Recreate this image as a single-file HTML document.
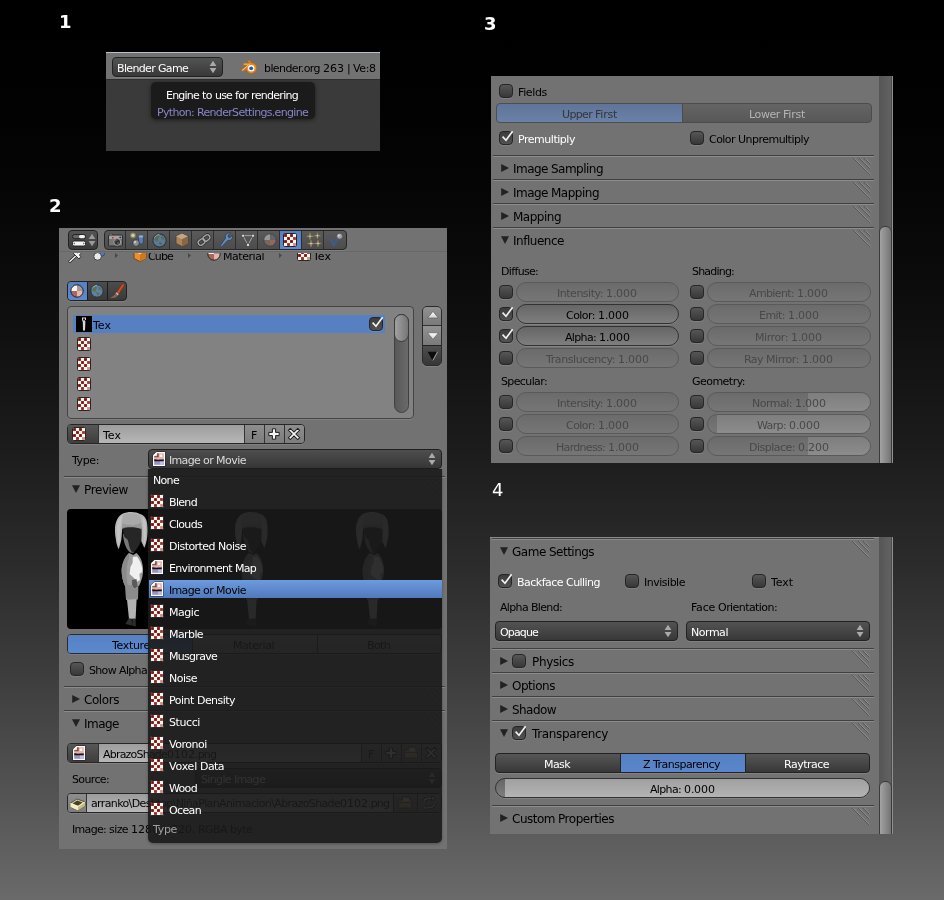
<!DOCTYPE html>
<html><head><meta charset="utf-8"><title>Blender UI</title>
<style>
html,body{margin:0;padding:0}
body{width:944px;height:900px;overflow:hidden;position:relative;font-family:"DejaVu Sans","Liberation Sans",sans-serif;font-size:11px;color:#000;
background:linear-gradient(180.00deg,#000000 0.00%,#000000 4.17%,#010101 8.33%,#020202 12.50%,#040404 16.67%,#050505 20.83%,#080808 25.00%,#0a0a0a 29.17%,#0d0d0d 33.33%,#101010 37.50%,#141414 41.67%,#181818 45.83%,#1c1c1c 50.00%,#212121 54.17%,#262626 58.33%,#2b2b2b 62.50%,#313131 66.67%,#373737 70.83%,#3d3d3d 75.00%,#444444 79.17%,#4b4b4b 83.33%,#525252 87.50%,#5a5a5a 91.67%,#626262 95.83%,#6a6a6a 100.00%)}
.abs,.abs div,.abs svg{position:absolute;box-sizing:border-box;white-space:nowrap}
.abs svg{overflow:visible}
.abs,.num{will-change:transform}
.num{position:absolute;color:#fff;font-weight:bold;font-size:18px;line-height:20px}
.t{line-height:14px;height:14px}
</style></head><body>
<div class="num" style="left:59px;top:12px">1</div>
<div class="num" style="left:49px;top:196px">2</div>
<div class="num" style="left:484px;top:14px">3</div>
<div class="num" style="left:492px;top:480px;font-weight:normal">4</div>
<!-- PANEL 1 -->
<div class="abs" style="left:106px;top:52px;width:274px;height:99px;background:#3a3a3a;overflow:hidden">
<div style="left:0px;top:0px;width:274px;height:28px;background:#727272;border-top:1px solid #b4bfd0;border-bottom:1px solid #2e2e2e"></div><div style="left:6px;top:5px;width:111px;height:20px;background:linear-gradient(#535353,#383838);border:1px solid #222;border-radius:4px;box-shadow:0 1px 0 rgba(255,255,255,.10)"></div><div class="t" style="left:11px;top:10px;font-size:11px;color:#fff;"><span style="letter-spacing:-0.66px">Blender</span><span style="letter-spacing:-0.50px"> </span><span style="letter-spacing:-0.69px">Game</span></div><svg style="left:103px;top:8px" width="8" height="14" viewBox="0 0 8 14"><path d="M4 0.8 L7.4 6 L0.6 6 Z M4 13.2 L7.4 8 L0.6 8 Z" fill="#aaa"/></svg><svg style="left:135px;top:8px" width="17" height="15" viewBox="0 0 17 15"><g fill="#f08a14" stroke="#b8620a" stroke-width="0.5" stroke-linejoin="round"><path d="M0.3 10.3 L7 4.6 L9.4 6.6 L1.7 11.5 Z"/><path d="M2.2 3.5 L9.8 3.5 L9.8 5.3 L2.2 5.3 Z"/><path d="M6.7 1.3 L7.9 0.3 L12 3.4 L10 4.8 Z"/><circle cx="10.3" cy="8.1" r="5.3"/></g><path d="M1.2 10.3 L7 5.4" stroke="#ffc884" stroke-width="0.9" fill="none"/><path d="M2.8 4.1 L9 4.1" stroke="#ffc884" stroke-width="0.8" fill="none"/><circle cx="10.2" cy="8.2" r="3.3" fill="#fff"/><circle cx="10.2" cy="8.3" r="1.9" fill="#2659b5"/></svg><div class="t" style="left:158px;top:10px;font-size:11px;color:#000;"><span style="letter-spacing:-0.60px">blender.org</span><span style="letter-spacing:-0.50px"> </span>263<span style="letter-spacing:-0.50px"> </span><span style="letter-spacing:-0.70px">|</span><span style="letter-spacing:-0.50px"> </span><span style="letter-spacing:-0.38px">Ve:</span>8</div><div style="left:45px;top:30px;width:164px;height:37px;background:#1b1b1b;border-radius:5px;box-shadow:0 1px 4px rgba(0,0,0,.55)"></div><div class="t" style="left:60px;top:37px;font-size:11px;color:#fff;"><span style="letter-spacing:-0.78px">Engine</span><span style="letter-spacing:-0.50px"> </span><span style="letter-spacing:-0.52px">to</span><span style="letter-spacing:-0.50px"> </span><span style="letter-spacing:-0.82px">use</span><span style="letter-spacing:-0.50px"> </span><span style="letter-spacing:-0.71px">for</span><span style="letter-spacing:-0.50px"> </span><span style="letter-spacing:-0.70px">rendering</span></div><div class="t" style="left:51px;top:54px;font-size:11px;color:#8686c8;"><span style="letter-spacing:-0.69px">Python:</span><span style="letter-spacing:-0.50px"> </span><span style="letter-spacing:-0.68px">RenderSettings.engine</span></div>
</div>
<!-- PANEL 2 -->
<div class="abs" style="left:59px;top:228px;width:388px;height:621px;background:#727272;overflow:hidden">
<div style="left:9px;top:2px;width:30px;height:20px;background:linear-gradient(#555,#3a3a3a);border:1px solid #222;border-radius:4px;box-shadow:0 1px 0 rgba(255,255,255,.1)"></div><svg style="left:13px;top:6px" width="14" height="13" viewBox="0 0 14 13"><rect x="0.5" y="0.5" width="13" height="4.2" rx="2" fill="#666" stroke="#1c1c1c" stroke-width="0.9"/><rect x="7" y="1" width="6" height="3.2" rx="1.6" fill="#f2f2f2"/><rect x="0.5" y="7" width="13" height="5" rx="1.6" fill="#f4f4f4" stroke="#1c1c1c" stroke-width="0.9"/><path d="M2.6 8.4 L1.4 9.5 L2.6 10.6 Z M11.4 8.4 L12.6 9.5 L11.4 10.6 Z" fill="#222"/></svg><svg style="left:29px;top:5px" width="8" height="14" viewBox="0 0 8 14"><path d="M4 0.8 L7.4 6 L0.6 6 Z M4 13.2 L7.4 8 L0.6 8 Z" fill="#9a9a9a"/></svg><div style="left:45px;top:2px;width:243px;height:20px;background:linear-gradient(#5a5a5a,#4c4c4c);border:1px solid #262626;border-radius:4px;box-shadow:0 1px 0 rgba(255,255,255,.1)"></div><div style="left:48px;top:4px;width:17px;height:16px;opacity:.85"><svg style="left:0px;top:0px" width="17" height="16" viewBox="0 0 17 16"><rect x="2.4" y="1.6" width="2.6" height="2" fill="#c8c8c8" stroke="#333" stroke-width="0.5"/><rect x="1.5" y="3" width="14" height="11" rx="0.8" fill="#7e7e7e" stroke="#262626" stroke-width="1"/><rect x="2.2" y="3.8" width="12.6" height="3.2" fill="#b4b4b4"/><circle cx="10.2" cy="10" r="3.4" fill="#2c2c30" stroke="#bdbdbd" stroke-width="0.9"/><path d="M8.4 9.4 A2 2 0 0 1 10.6 8" stroke="#a04848" stroke-width="1.2" fill="none"/><circle cx="11" cy="11" r="0.9" fill="#4a6a9c"/><rect x="5" y="5" width="1.6" height="1.4" fill="#e02020"/><rect x="12.4" y="4.6" width="1.8" height="1.6" fill="#2a2a3a"/></svg></div><div style="left:66px;top:3px;width:1px;height:18px;background:#2e2e2e"></div><div style="left:71px;top:4px;width:17px;height:16px;opacity:.85"><svg style="left:0px;top:0px" width="16" height="16" viewBox="0 0 16 16"><rect x="8.6" y="3.4" width="4.8" height="8.6" rx="2" fill="#5e86c0" stroke="#2a3e5c" stroke-width="0.8"/><ellipse cx="11" cy="4.4" rx="2.4" ry="1.2" fill="#9cbce4"/><circle cx="6" cy="11" r="3.4" fill="#9a9a9a" stroke="#2a2a2a" stroke-width="0.8"/><circle cx="5" cy="10" r="1.2" fill="#dcdcdc"/><circle cx="3" cy="3.4" r="1.8" fill="#e8e49a"/><circle cx="3" cy="3.4" r="3" fill="#e8e49a" fill-opacity=".3"/></svg></div><div style="left:88px;top:3px;width:1px;height:18px;background:#2e2e2e"></div><div style="left:93px;top:5px;width:15px;height:15px;opacity:.85"><svg style="left:0px;top:0px" width="15" height="15" viewBox="0 0 14 14"><circle cx="7" cy="7" r="6.2" fill="#5e80aa" stroke="#26303c" stroke-width="1"/><path d="M3 3.4 C4.5 2 6.5 2.4 7 3.6 C6.2 5 5.6 5.4 5.8 7 C5 8.6 3.6 7.6 2.4 6.2 Z" fill="#5e7244"/><path d="M8.6 3 C10 2.8 11.6 4.4 11.8 6.2 C10.8 6.6 10.2 5.6 9.2 5.8 C8.4 5 8.2 4 8.6 3 Z" fill="#5e7244"/><path d="M6.4 8.6 C7.6 8 9 8.6 9.6 9.8 C9 11.4 7.8 11.8 6.8 11 Z" fill="#5e7244"/><path d="M2.2 4.4 A6 6 0 0 1 7 1.2" fill="none" stroke="#c8d8ec" stroke-width="0.9" stroke-opacity=".7"/></svg></div><div style="left:110px;top:3px;width:1px;height:18px;background:#2e2e2e"></div><div style="left:115px;top:4px;width:17px;height:16px;opacity:.85"><svg style="left:0px;top:0px" width="16" height="16" viewBox="0 0 16 16"><path d="M8 1.4 L14 4.2 L14 11.4 L8 14.6 L2 11.4 L2 4.2 Z" fill="#b98d5e" stroke="#4e3a24" stroke-width="0.8"/><path d="M8 1.4 L14 4.2 L8 7.2 L2 4.2 Z" fill="#d2b690"/><path d="M8 7.2 L14 4.2 L14 11.4 L8 14.6 Z" fill="#946a40"/></svg></div><div style="left:132px;top:3px;width:1px;height:18px;background:#2e2e2e"></div><div style="left:137px;top:4px;width:17px;height:16px;opacity:.85"><svg style="left:0px;top:0px" width="16" height="16" viewBox="0 0 16 16"><g fill="none" stroke="#2a2a2a" stroke-width="3"><rect x="-3.6" y="-2.6" width="7.2" height="5.2" rx="2.6" transform="translate(5.6 10) rotate(-38)"/><rect x="-3.6" y="-2.6" width="7.2" height="5.2" rx="2.6" transform="translate(10.4 6) rotate(-38)"/></g><g fill="none" stroke="#b4b4b4" stroke-width="1.4"><rect x="-3.6" y="-2.6" width="7.2" height="5.2" rx="2.6" transform="translate(5.6 10) rotate(-38)"/><rect x="-3.6" y="-2.6" width="7.2" height="5.2" rx="2.6" transform="translate(10.4 6) rotate(-38)"/></g></svg></div><div style="left:154px;top:3px;width:1px;height:18px;background:#2e2e2e"></div><div style="left:159px;top:4px;width:17px;height:16px;opacity:.85"><svg style="left:0px;top:0px" width="16" height="16" viewBox="0 0 16 16"><path d="M2.2 13.8 L3.6 15 L10 8.2 C11.8 8.8 13.6 8 14.4 6 C14.8 5 14.8 4 14.4 3.2 L12.2 5.6 L10.4 5.2 L10 3.4 L12.4 1.2 C11.4 0.8 10.2 0.8 9.2 1.4 C7.4 2.4 6.8 4.2 7.6 6 Z" fill="#6a94cc" stroke="#23384f" stroke-width="0.8" stroke-linejoin="round"/></svg></div><div style="left:176px;top:3px;width:1px;height:18px;background:#2e2e2e"></div><div style="left:181px;top:4px;width:17px;height:16px;opacity:.85"><svg style="left:0px;top:0px" width="16" height="16" viewBox="0 0 16 16"><path d="M3 3.6 L13 3.6 L8 13 Z" fill="none" stroke="#b0b0b0" stroke-width="1"/><rect x="1.8" y="2.4" width="2.6" height="2.6" fill="#f4f4f4" stroke="#333" stroke-width="0.5"/><rect x="11.6" y="2.4" width="2.6" height="2.6" fill="#f4f4f4" stroke="#333" stroke-width="0.5"/><rect x="6.7" y="11.6" width="2.6" height="2.6" fill="#f4f4f4" stroke="#333" stroke-width="0.5"/></svg></div><div style="left:198px;top:3px;width:1px;height:18px;background:#2e2e2e"></div><div style="left:203px;top:4px;width:17px;height:16px;opacity:.85"><svg style="left:0px;top:0px" width="16" height="16" viewBox="0 0 16 16"><defs><clipPath id="mg"><circle cx="8" cy="8" r="6.2"/></clipPath></defs><g clip-path="url(#mg)"><rect x="0" y="0" width="8" height="8" fill="#a4a4a4"/><rect x="8" y="0" width="8" height="8" fill="#686868"/><rect x="0" y="8" width="8" height="8" fill="#7c6c68"/><rect x="8" y="8" width="8" height="8" fill="#a26a60"/></g><circle cx="8" cy="8" r="6.2" fill="none" stroke="#3a3a3a" stroke-width="0.8"/></svg></div><div style="left:220px;top:3px;width:1px;height:18px;background:#2e2e2e"></div><div style="left:221px;top:3px;width:21px;height:18px;background:linear-gradient(#5680c2,#5c8ad0)"></div><svg style="left:224px;top:5px" width="14" height="14" viewBox="0 0 14 14"><rect x="0.5" y="0.5" width="13" height="13" rx="1.2" fill="#fbf8f6" stroke="#2a2626" stroke-width="1"/><rect x="1.1" y="1.1" width="2.8" height="2.8" fill="#800c06"/><rect x="7.1" y="1.1" width="2.8" height="2.8" fill="#800c06"/><rect x="4.1" y="4.1" width="2.8" height="2.8" fill="#800c06"/><rect x="10.1" y="4.1" width="2.8" height="2.8" fill="#a03024"/><rect x="1.1" y="7.1" width="2.8" height="2.8" fill="#800c06"/><rect x="7.1" y="7.1" width="2.8" height="2.8" fill="#800c06"/><rect x="4.1" y="10.1" width="2.8" height="2.8" fill="#98241a"/><rect x="10.1" y="10.1" width="2.8" height="2.8" fill="#d08878"/></svg><div style="left:242px;top:3px;width:1px;height:18px;background:#2e2e2e"></div><div style="left:247px;top:4px;width:17px;height:16px;opacity:.85"><svg style="left:0px;top:0px" width="16" height="16" viewBox="0 0 16 16"><path d="M4 0.6000000000000001 L4.55 3.6500000000000004 L7.6 4.2 L4.55 4.75 L4 7.800000000000001 L3.45 4.75 L0.3999999999999999 4.2 L3.45 3.6500000000000004 Z" fill="#f6f0d0" stroke="#9a8440" stroke-width="0.5"/><path d="M11.4 0.5999999999999996 L11.950000000000001 3.25 L14.600000000000001 3.8 L11.950000000000001 4.35 L11.4 7.0 L10.85 4.35 L8.2 3.8 L10.85 3.25 Z" fill="#f6f0d0" stroke="#9a8440" stroke-width="0.5"/><path d="M5 8.0 L5.55 11.049999999999999 L8.6 11.6 L5.55 12.15 L5 15.2 L4.45 12.15 L1.4 11.6 L4.45 11.049999999999999 Z" fill="#f6f0d0" stroke="#9a8440" stroke-width="0.5"/><path d="M12 8.0 L12.55 10.85 L15.4 11.4 L12.55 11.950000000000001 L12 14.8 L11.45 11.950000000000001 L8.6 11.4 L11.45 10.85 Z" fill="#f6f0d0" stroke="#9a8440" stroke-width="0.5"/></svg></div><div style="left:264px;top:3px;width:1px;height:18px;background:#2e2e2e"></div><div style="left:269px;top:4px;width:17px;height:16px;opacity:.85"><svg style="left:0px;top:0px" width="16" height="16" viewBox="0 0 16 16"><path d="M2 6.6 L5.8 13.6 L10.4 5.6" fill="none" stroke="#3a5e94" stroke-width="2.2" stroke-linejoin="miter"/><circle cx="11.6" cy="4.2" r="3" fill="#b4b4b4" stroke="#444" stroke-width="0.7"/><circle cx="10.8" cy="3.4" r="1" fill="#eee"/></svg></div><div style="left:0px;top:23px;width:388px;height:1px;background:#686868"></div><div style="left:0px;top:25px;width:388px;height:20px;overflow:hidden"><svg style="left:10px;top:-5px" width="16" height="16" viewBox="0 0 16 16"><path d="M0.8 13.6 L6.4 8.2" stroke="#222" stroke-width="2.8" stroke-linecap="round"/><path d="M0.8 13.6 L6.4 8.2" stroke="#f0f0f0" stroke-width="1.4" stroke-linecap="round"/><path d="M3.2 4.2 L10 11 L11.8 8.6 L10.4 7 L14 3.4 L12 1.4 L8.4 5 L6 3 Z" fill="#f2f2f2" stroke="#222" stroke-width="0.9" stroke-linejoin="round"/></svg><svg style="left:33px;top:-4px" width="16" height="16" viewBox="0 0 16 16"><rect x="7.4" y="0" width="5" height="7" rx="2" fill="#4c7cc8" stroke="#1e3860" stroke-width="0.7"/><circle cx="5.6" cy="7.4" r="3.8" fill="#eaeaea" stroke="#2a2a2a" stroke-width="0.8"/></svg><svg style="left:56px;top:0px" width="3" height="5" viewBox="0 0 3 5"><path d="M0 0 L3 2.5 L0 5 Z" fill="#484848"/></svg><svg style="left:73px;top:-6px" width="16" height="16" viewBox="0 0 16 16"><path d="M8 1.4 L14 4.2 L14 11.4 L8 14.6 L2 11.4 L2 4.2 Z" fill="#e89030" stroke="#6a3c0c" stroke-width="0.8"/><path d="M8 1.4 L14 4.2 L8 7.2 L2 4.2 Z" fill="#f8d8a0"/><path d="M8 7.2 L14 4.2 L14 11.4 L8 14.6 Z" fill="#d07818"/></svg><div class="t" style="left:89px;top:-3px;font-size:11px;color:#000;"><span style="letter-spacing:-0.85px">Cube</span></div><svg style="left:129px;top:0px" width="3" height="5" viewBox="0 0 3 5"><path d="M0 0 L3 2.5 L0 5 Z" fill="#484848"/></svg><svg style="left:148px;top:-6px" width="14" height="14" viewBox="0 0 14 14"><defs><clipPath id="mc"><circle cx="7" cy="7" r="6.2"/></clipPath></defs><g clip-path="url(#mc)"><rect x="0" y="0" width="7" height="7" fill="#f4f4f4"/><rect x="7" y="0" width="7" height="7" fill="#a09a98"/><rect x="0" y="7" width="7" height="7" fill="#a9675c"/><rect x="7" y="7" width="7" height="7" fill="#e8b4a8"/></g><circle cx="7" cy="7" r="6.2" fill="none" stroke="#222" stroke-width="1"/></svg><div class="t" style="left:164px;top:-3px;font-size:11px;color:#000;"><span style="letter-spacing:-0.46px">Material</span></div><svg style="left:220px;top:0px" width="3" height="5" viewBox="0 0 3 5"><path d="M0 0 L3 2.5 L0 5 Z" fill="#484848"/></svg><svg style="left:238px;top:-6px" width="14" height="14" viewBox="0 0 14 14"><rect x="0.5" y="0.5" width="13" height="13" rx="1.2" fill="#fbf8f6" stroke="#2a2626" stroke-width="1"/><rect x="1.1" y="1.1" width="2.8" height="2.8" fill="#800c06"/><rect x="7.1" y="1.1" width="2.8" height="2.8" fill="#800c06"/><rect x="4.1" y="4.1" width="2.8" height="2.8" fill="#800c06"/><rect x="10.1" y="4.1" width="2.8" height="2.8" fill="#a03024"/><rect x="1.1" y="7.1" width="2.8" height="2.8" fill="#800c06"/><rect x="7.1" y="7.1" width="2.8" height="2.8" fill="#800c06"/><rect x="4.1" y="10.1" width="2.8" height="2.8" fill="#98241a"/><rect x="10.1" y="10.1" width="2.8" height="2.8" fill="#d08878"/></svg><div class="t" style="left:254px;top:-3px;font-size:11px;color:#000;"><span style="letter-spacing:0.02px">Tex</span></div></div><div style="left:8px;top:53px;width:60px;height:20px;background:linear-gradient(#4c4c4c,#3a3a3a);border:1px solid #222;border-radius:4px;overflow:hidden;box-shadow:0 1px 0 rgba(255,255,255,.1)"><div style="left:-1px;top:-1px;width:20px;height:20px;background:linear-gradient(#5680c2,#5c8ad0)"></div><div style="left:19px;top:-1px;width:1px;height:20px;background:#1c1c1c"></div><div style="left:39px;top:-1px;width:1px;height:20px;background:#1c1c1c"></div></div><svg style="left:11px;top:56px" width="14" height="14" viewBox="0 0 14 14"><defs><clipPath id="mc"><circle cx="7" cy="7" r="6.2"/></clipPath></defs><g clip-path="url(#mc)"><rect x="0" y="0" width="7" height="7" fill="#f4f4f4"/><rect x="7" y="0" width="7" height="7" fill="#a09a98"/><rect x="0" y="7" width="7" height="7" fill="#a9675c"/><rect x="7" y="7" width="7" height="7" fill="#e8b4a8"/></g><circle cx="7" cy="7" r="6.2" fill="none" stroke="#222" stroke-width="1"/></svg><svg style="left:31px;top:56px" width="14" height="14" viewBox="0 0 14 14"><circle cx="7" cy="7" r="6.2" fill="#5e80aa" stroke="#26303c" stroke-width="1"/><path d="M3 3.4 C4.5 2 6.5 2.4 7 3.6 C6.2 5 5.6 5.4 5.8 7 C5 8.6 3.6 7.6 2.4 6.2 Z" fill="#5e7244"/><path d="M8.6 3 C10 2.8 11.6 4.4 11.8 6.2 C10.8 6.6 10.2 5.6 9.2 5.8 C8.4 5 8.2 4 8.6 3 Z" fill="#5e7244"/><path d="M6.4 8.6 C7.6 8 9 8.6 9.6 9.8 C9 11.4 7.8 11.8 6.8 11 Z" fill="#5e7244"/><path d="M2.2 4.4 A6 6 0 0 1 7 1.2" fill="none" stroke="#c8d8ec" stroke-width="0.9" stroke-opacity=".7"/></svg><svg style="left:50px;top:55px" width="16" height="16" viewBox="0 0 16 16"><path d="M13.6 0.6 L15.6 2 L9.8 11 L7.4 9.4 Z" fill="#cc4e22" stroke="#6a2410" stroke-width="0.5"/><path d="M7.4 9.2 L9.8 11 L8.8 12.4 L6.6 10.8 Z" fill="#b4c0d0"/><path d="M6.6 10.8 L8.8 12.4 C7.6 14.6 4.6 15 0.8 15 C3.8 13.8 5.2 12.6 6.6 10.8 Z" fill="#8e6450"/></svg><div style="left:8px;top:78px;width:347px;height:113px;background:#828282;border:1px solid #444;border-radius:4px;box-shadow:0 1px 0 rgba(255,255,255,.1)"><div style="left:-1px;top:-1px;width:345px;height:111px;"><div style="left:6px;top:9px;width:312px;height:18px;background:#5680c2;border-radius:2px"></div><div style="left:9px;top:10px;width:16px;height:16px;background:#000"></div><svg style="left:14px;top:11px" width="6" height="14" viewBox="0 0 6 14"><path d="M1 0.5 L5 0.5 L5 3 L4 3 L4.4 5 L4 13.5 L2 13.5 L1.8 5 L1 3 Z" fill="#d8d8d8"/><rect x="2" y="1.4" width="2" height="2" fill="#222"/></svg><div class="t" style="left:26px;top:13px;font-size:11px;color:#000;"><span style="letter-spacing:0.02px">Tex</span></div><div style="left:302px;top:11px;width:14px;height:14px;background:linear-gradient(#3c3c3c,#525252);border:1px solid #262626;border-radius:4px;box-shadow:0 1px 0 rgba(255,255,255,.10)"></div><svg style="left:302px;top:8px" width="18" height="18" viewBox="0 0 18 18"><path d="M3.6 8.6 L7 12.2 L13.6 3.2" fill="none" stroke="#f4f4f4" stroke-width="1.6" stroke-linecap="butt" stroke-linejoin="miter"/></svg><svg style="left:10px;top:31px" width="14" height="14" viewBox="0 0 14 14"><rect x="0.5" y="0.5" width="13" height="13" rx="1.2" fill="#fbf8f6" stroke="#2a2626" stroke-width="1"/><rect x="1.1" y="1.1" width="2.8" height="2.8" fill="#800c06"/><rect x="7.1" y="1.1" width="2.8" height="2.8" fill="#800c06"/><rect x="4.1" y="4.1" width="2.8" height="2.8" fill="#800c06"/><rect x="10.1" y="4.1" width="2.8" height="2.8" fill="#a03024"/><rect x="1.1" y="7.1" width="2.8" height="2.8" fill="#800c06"/><rect x="7.1" y="7.1" width="2.8" height="2.8" fill="#800c06"/><rect x="4.1" y="10.1" width="2.8" height="2.8" fill="#98241a"/><rect x="10.1" y="10.1" width="2.8" height="2.8" fill="#d08878"/></svg><svg style="left:10px;top:51px" width="14" height="14" viewBox="0 0 14 14"><rect x="0.5" y="0.5" width="13" height="13" rx="1.2" fill="#fbf8f6" stroke="#2a2626" stroke-width="1"/><rect x="1.1" y="1.1" width="2.8" height="2.8" fill="#800c06"/><rect x="7.1" y="1.1" width="2.8" height="2.8" fill="#800c06"/><rect x="4.1" y="4.1" width="2.8" height="2.8" fill="#800c06"/><rect x="10.1" y="4.1" width="2.8" height="2.8" fill="#a03024"/><rect x="1.1" y="7.1" width="2.8" height="2.8" fill="#800c06"/><rect x="7.1" y="7.1" width="2.8" height="2.8" fill="#800c06"/><rect x="4.1" y="10.1" width="2.8" height="2.8" fill="#98241a"/><rect x="10.1" y="10.1" width="2.8" height="2.8" fill="#d08878"/></svg><svg style="left:10px;top:71px" width="14" height="14" viewBox="0 0 14 14"><rect x="0.5" y="0.5" width="13" height="13" rx="1.2" fill="#fbf8f6" stroke="#2a2626" stroke-width="1"/><rect x="1.1" y="1.1" width="2.8" height="2.8" fill="#800c06"/><rect x="7.1" y="1.1" width="2.8" height="2.8" fill="#800c06"/><rect x="4.1" y="4.1" width="2.8" height="2.8" fill="#800c06"/><rect x="10.1" y="4.1" width="2.8" height="2.8" fill="#a03024"/><rect x="1.1" y="7.1" width="2.8" height="2.8" fill="#800c06"/><rect x="7.1" y="7.1" width="2.8" height="2.8" fill="#800c06"/><rect x="4.1" y="10.1" width="2.8" height="2.8" fill="#98241a"/><rect x="10.1" y="10.1" width="2.8" height="2.8" fill="#d08878"/></svg><svg style="left:10px;top:91px" width="14" height="14" viewBox="0 0 14 14"><rect x="0.5" y="0.5" width="13" height="13" rx="1.2" fill="#fbf8f6" stroke="#2a2626" stroke-width="1"/><rect x="1.1" y="1.1" width="2.8" height="2.8" fill="#800c06"/><rect x="7.1" y="1.1" width="2.8" height="2.8" fill="#800c06"/><rect x="4.1" y="4.1" width="2.8" height="2.8" fill="#800c06"/><rect x="10.1" y="4.1" width="2.8" height="2.8" fill="#a03024"/><rect x="1.1" y="7.1" width="2.8" height="2.8" fill="#800c06"/><rect x="7.1" y="7.1" width="2.8" height="2.8" fill="#800c06"/><rect x="4.1" y="10.1" width="2.8" height="2.8" fill="#98241a"/><rect x="10.1" y="10.1" width="2.8" height="2.8" fill="#d08878"/></svg><div style="left:327px;top:8px;width:15px;height:99px;background:linear-gradient(to right,#585858,#6a6a6a);border:1px solid #404040;border-radius:8px"></div><div style="left:327px;top:8px;width:15px;height:28px;background:linear-gradient(to right,#a0a0a0,#767676);border:1px solid #3c3c3c;border-radius:8px"></div></div></div><div style="left:363px;top:78px;width:20px;height:60px;border:1px solid #2a2a2a;border-radius:5px;overflow:hidden;background:#444;box-shadow:0 1px 0 rgba(255,255,255,.1)"><div style="left:-1px;top:-1px;width:20px;height:19px;background:linear-gradient(#929292,#7a7a7a)"></div><div style="left:-1px;top:18px;width:20px;height:20px;background:linear-gradient(#929292,#7a7a7a);border-top:1px solid #333"></div><div style="left:-1px;top:38px;width:20px;height:22px;background:linear-gradient(#4e4e4e,#343434);border-top:1px solid #222"></div><svg style="left:4px;top:4px" width="12" height="8" viewBox="0 0 12 8"><defs><linearGradient id="tg" x1="0" y1="0" x2="0" y2="1"><stop offset="0" stop-color="#fff"/><stop offset="1" stop-color="#d0d0d0"/></linearGradient></defs><path d="M6 0.4 L11.4 7 L0.6 7 Z" fill="url(#tg)" stroke="#555" stroke-width="0.6"/></svg><svg style="left:4px;top:25px" width="12" height="8" viewBox="0 0 12 8"><path d="M0.6 0.8 L11.4 0.8 L6 7.4 Z" fill="url(#tg)" stroke="#555" stroke-width="0.6"/></svg><svg style="left:4px;top:44px" width="12" height="10" viewBox="0 0 12 10"><path d="M0.6 0.8 L10 0.8 L5.2 9 Z" fill="#0c0c0c"/><path d="M10.6 0.8 L6 9.4" stroke="#999" stroke-width="1" fill="none"/></svg></div><div style="left:8px;top:196px;width:238px;height:20px;border:1px solid #262626;border-radius:4px;overflow:hidden;background:#888;box-shadow:0 1px 0 rgba(255,255,255,.1)"><div style="left:-1px;top:-1px;width:31px;height:20px;background:linear-gradient(#585858,#3c3c3c)"></div><div style="left:30px;top:-1px;width:147px;height:20px;background:linear-gradient(#9c9c9c,#b8b8b8);border-left:1px solid #333"></div><div style="left:176px;top:-1px;width:21px;height:20px;background:linear-gradient(#8e8e8e,#7c7c7c);border-left:1px solid #333"></div><div style="left:196px;top:-1px;width:21px;height:20px;background:linear-gradient(#8e8e8e,#7c7c7c);border-left:1px solid #333"></div><div style="left:216px;top:-1px;width:21px;height:20px;background:linear-gradient(#8e8e8e,#7c7c7c);border-left:1px solid #333"></div></div><svg style="left:13px;top:199px" width="14" height="14" viewBox="0 0 14 14"><rect x="0.5" y="0.5" width="13" height="13" rx="1.2" fill="#fbf8f6" stroke="#2a2626" stroke-width="1"/><rect x="1.1" y="1.1" width="2.8" height="2.8" fill="#800c06"/><rect x="7.1" y="1.1" width="2.8" height="2.8" fill="#800c06"/><rect x="4.1" y="4.1" width="2.8" height="2.8" fill="#800c06"/><rect x="10.1" y="4.1" width="2.8" height="2.8" fill="#a03024"/><rect x="1.1" y="7.1" width="2.8" height="2.8" fill="#800c06"/><rect x="7.1" y="7.1" width="2.8" height="2.8" fill="#800c06"/><rect x="4.1" y="10.1" width="2.8" height="2.8" fill="#98241a"/><rect x="10.1" y="10.1" width="2.8" height="2.8" fill="#d08878"/></svg><div class="t" style="left:44px;top:201px;font-size:11px;color:#000;"><span style="letter-spacing:0.02px">Tex</span></div><div class="t" style="left:192px;top:201px;font-size:11px;color:#000;"><span style="letter-spacing:-0.33px">F</span></div><svg style="left:207px;top:198px" width="16" height="16" viewBox="0 0 16 16"><path d="M6.4 2.8 L9.6 2.8 L9.6 6.4 L13.2 6.4 L13.2 9.6 L9.6 9.6 L9.6 13.2 L6.4 13.2 L6.4 9.6 L2.8 9.6 L2.8 6.4 L6.4 6.4 Z" fill="#f6f6f6" stroke="#1c1c1c" stroke-width="1"/></svg><svg style="left:227px;top:198px" width="16" height="16" viewBox="0 0 16 16"><g transform="rotate(45 8 8)"><path d="M6.7 1.4 L9.3 1.4 L9.3 6.7 L14.6 6.7 L14.6 9.3 L9.3 9.3 L9.3 14.6 L6.7 14.6 L6.7 9.3 L1.4 9.3 L1.4 6.7 L6.7 6.7 Z" fill="#f6f6f6" stroke="#1c1c1c" stroke-width="1"/></g></svg><div class="t" style="left:13px;top:226px;font-size:11px;color:#000;"><span style="letter-spacing:-0.39px">Type:</span></div><div style="left:89px;top:221px;width:294px;height:20px;background:linear-gradient(#4e4e4e,#363636);border:1px solid #1e1e1e;border-radius:4px"></div><svg style="left:94px;top:224px" width="12" height="14" viewBox="0 0 12 14"><path d="M3.4 -0.4 L12.4 -0.4 L12.4 14.4 L-0.4 14.4 L-0.4 3.4 Z" fill="#1c1c1c"/><path d="M3.6 0 L12 0 L12 14 L0 14 L0 3.6 Z" fill="#fcfcfc"/><path d="M4.2 1.2 L10.8 1.2 L10.8 8 L1.2 8 L1.2 4.2 Z" fill="#e8b2aa"/><path d="M1.2 4.2 L4.2 4.2 L4.2 1.2 L5.6 1.2 L5.6 5.2 L1.2 5.2 Z" fill="#6a4440"/><rect x="6.8" y="2.6" width="2.4" height="2.4" fill="#fffaf6"/><rect x="1.2" y="9" width="9.6" height="3.8" fill="#9a92c4"/><rect x="7" y="9" width="3.8" height="3.8" fill="#bcbce4"/><path d="M1.2 7.3 C3 6.9 4.4 8.1 6 7.7 C7.4 7.2 9 7.9 10.8 7.3 L10.8 9.2 L1.2 9.2 Z" fill="#131313"/><path d="M0 3.6 L3.6 3.6 L3.6 0 Z" fill="#fff"/></svg><div class="t" style="left:110px;top:226px;font-size:11px;color:#dcdcdc;"><span style="letter-spacing:-0.69px">Image</span><span style="letter-spacing:-0.50px"> </span><span style="letter-spacing:-0.62px">or</span><span style="letter-spacing:-0.50px"> </span><span style="letter-spacing:-0.51px">Movie</span></div><svg style="left:369px;top:224px" width="8" height="14" viewBox="0 0 8 14"><path d="M4 0.8 L7.4 6 L0.6 6 Z M4 13.2 L7.4 8 L0.6 8 Z" fill="#aaa"/></svg><div style="left:5px;top:248px;width:381px;height:1px;background:#404040"></div><div style="left:5px;top:249px;width:381px;height:1px;background:#8b8b8b"></div><svg style="left:13px;top:257px" width="8" height="8" viewBox="0 0 8 8"><path d="M0 0.2 L8 0.2 L4 8 Z" fill="#222"/></svg><div class="t" style="left:25px;top:255px;font-size:12px;color:#000;"><span style="letter-spacing:-0.39px">Preview</span></div><svg style="left:365px;top:251px" width="20" height="19" viewBox="0 0 20 19"><path d="M0 0 L17 17" stroke="#575757" stroke-width="1" fill="none"/><path d="M1.2 0 L17.6 16.4" stroke="#909090" stroke-width="1" fill="none"/><path d="M6 0 L17 11" stroke="#575757" stroke-width="1" fill="none"/><path d="M7.2 0 L17.6 10.4" stroke="#909090" stroke-width="1" fill="none"/><path d="M11 0 L17 6" stroke="#575757" stroke-width="1" fill="none"/><path d="M12.2 0 L17.6 5.4" stroke="#909090" stroke-width="1" fill="none"/></svg><div style="left:8px;top:281px;width:375px;height:120px;background:#000;border-radius:4px;overflow:hidden"><svg style="left:48px;top:3px;opacity:1.0" width="34" height="115" viewBox="0 0 34 115"><path d="M7 2 C10 0.5 13 0 16.3 0 C20 0 23 0.8 25 2 C29 3 32 7 32.3 12.7 C32.8 17 32.6 21 32.3 24 C31.8 29 30.6 33 29.3 36 C28.4 33.5 27.2 31.5 26.3 29.3 L26.3 15 L7.4 15 L6.3 28 C5.6 31 4.6 34.5 3.7 37.3 C2.2 34 1.2 31 1 28 C0.2 24 -0.2 20 0 16 C0.3 10 3 4 7 2 Z" fill="#b6b6b6"/><path d="M8.4 3 C11 1 21 1 24.4 3.2 C26 6 26.6 10 26.3 16 L7.4 16 C7 10 7.4 6 8.4 3 Z" fill="#a9a9a9"/><path d="M7.4 11 C11 14 15 12 18 13.4 C21 12 24 12.6 26.3 10.6 L26.3 17 L7.4 17 Z" fill="#979797"/><path d="M2 14 C2.4 9 4.4 5 7 3.4 C5.6 9 5.6 20 5 27 C4.6 30 4 32 3.6 34 C2 27 1.6 20 2 14 Z" fill="#c4c4c4"/><path d="M27.4 5 C30 7 31.4 11 31.4 15 C31.6 22 30.6 29 29.4 33 C28.6 28 28.6 12 27.4 5 Z" fill="#c4c4c4"/><path d="M8 22 C8.4 30 11 37 15 40.4 L19 41 L14 24 Z" fill="#787878"/><path d="M8 16.4 C12 14.8 22 15 26.3 17.3 C26.6 22 26.4 26 25.7 29.3 C24 34 21.4 38.4 18.3 40.8 C15.6 39.4 14.4 36 13.6 31 C13 27 11.6 27 9.4 25 C8.4 22 8 19 8 16.4 Z" fill="#262626"/><path d="M14 41 C9.5 45 7 52 6.6 58 C6.6 64 8 70 10 74 L24 74 C27 68 28.5 62 28 56 C27.5 49 25 44 21.5 41 L18.3 43 Z" fill="#9c9c9c"/><path d="M14 41 C9.5 45 7 52 6.6 58 C6.6 64 8 70 10 74 L13 74 C11 66 11 54 14 46 Z" fill="#8a8a8a"/><path d="M17.8 45 L22 44.4 C26 50 28 56 27 60 L24.4 62 L25 68 L21.4 70 L19 66 L14.6 62 L15.4 55 L17.6 51 Z" fill="#f0f0f0"/><path d="M17 68 L21.5 67 L22.6 74 L19.6 76 L17 73 Z" fill="#5a5a5a"/><path d="M10 73.4 L17 73 L19.6 76 L22.6 74 L23.4 74 L23 87.4 L11 88 Z" fill="#8c8c8c"/><path d="M12 87.6 L21.6 87 L20.6 107 L14 107 Z" fill="#b2b2b2"/><path d="M13.6 106.4 L16.8 106.4 L17 113.4 L10.4 112 Z" fill="#2e2e2e"/><path d="M17.6 106.4 L20.6 106.4 L20.8 114.4 L17.2 113.4 Z" fill="#2e2e2e"/></svg><svg style="left:168px;top:3px;opacity:1.0" width="34" height="115" viewBox="0 0 34 115"><path d="M7 2 C10 0.5 13 0 16.3 0 C20 0 23 0.8 25 2 C29 3 32 7 32.3 12.7 C32.8 17 32.6 21 32.3 24 C31.8 29 30.6 33 29.3 36 C28.4 33.5 27.2 31.5 26.3 29.3 L26.3 15 L7.4 15 L6.3 28 C5.6 31 4.6 34.5 3.7 37.3 C2.2 34 1.2 31 1 28 C0.2 24 -0.2 20 0 16 C0.3 10 3 4 7 2 Z" fill="#b6b6b6"/><path d="M8.4 3 C11 1 21 1 24.4 3.2 C26 6 26.6 10 26.3 16 L7.4 16 C7 10 7.4 6 8.4 3 Z" fill="#a9a9a9"/><path d="M7.4 11 C11 14 15 12 18 13.4 C21 12 24 12.6 26.3 10.6 L26.3 17 L7.4 17 Z" fill="#979797"/><path d="M2 14 C2.4 9 4.4 5 7 3.4 C5.6 9 5.6 20 5 27 C4.6 30 4 32 3.6 34 C2 27 1.6 20 2 14 Z" fill="#c4c4c4"/><path d="M27.4 5 C30 7 31.4 11 31.4 15 C31.6 22 30.6 29 29.4 33 C28.6 28 28.6 12 27.4 5 Z" fill="#c4c4c4"/><path d="M8 22 C8.4 30 11 37 15 40.4 L19 41 L14 24 Z" fill="#787878"/><path d="M8 16.4 C12 14.8 22 15 26.3 17.3 C26.6 22 26.4 26 25.7 29.3 C24 34 21.4 38.4 18.3 40.8 C15.6 39.4 14.4 36 13.6 31 C13 27 11.6 27 9.4 25 C8.4 22 8 19 8 16.4 Z" fill="#262626"/><path d="M14 41 C9.5 45 7 52 6.6 58 C6.6 64 8 70 10 74 L24 74 C27 68 28.5 62 28 56 C27.5 49 25 44 21.5 41 L18.3 43 Z" fill="#9c9c9c"/><path d="M14 41 C9.5 45 7 52 6.6 58 C6.6 64 8 70 10 74 L13 74 C11 66 11 54 14 46 Z" fill="#8a8a8a"/><path d="M17.8 45 L22 44.4 C26 50 28 56 27 60 L24.4 62 L25 68 L21.4 70 L19 66 L14.6 62 L15.4 55 L17.6 51 Z" fill="#f0f0f0"/><path d="M17 68 L21.5 67 L22.6 74 L19.6 76 L17 73 Z" fill="#5a5a5a"/><path d="M10 73.4 L17 73 L19.6 76 L22.6 74 L23.4 74 L23 87.4 L11 88 Z" fill="#8c8c8c"/><path d="M12 87.6 L21.6 87 L20.6 107 L14 107 Z" fill="#b2b2b2"/><path d="M13.6 106.4 L16.8 106.4 L17 113.4 L10.4 112 Z" fill="#2e2e2e"/><path d="M17.6 106.4 L20.6 106.4 L20.8 114.4 L17.2 113.4 Z" fill="#2e2e2e"/></svg><svg style="left:289px;top:3px;opacity:1.0" width="34" height="115" viewBox="0 0 34 115"><path d="M7 2 C10 0.5 13 0 16.3 0 C20 0 23 0.8 25 2 C29 3 32 7 32.3 12.7 C32.8 17 32.6 21 32.3 24 C31.8 29 30.6 33 29.3 36 C28.4 33.5 27.2 31.5 26.3 29.3 L26.3 15 L7.4 15 L6.3 28 C5.6 31 4.6 34.5 3.7 37.3 C2.2 34 1.2 31 1 28 C0.2 24 -0.2 20 0 16 C0.3 10 3 4 7 2 Z" fill="#b6b6b6"/><path d="M8.4 3 C11 1 21 1 24.4 3.2 C26 6 26.6 10 26.3 16 L7.4 16 C7 10 7.4 6 8.4 3 Z" fill="#a9a9a9"/><path d="M7.4 11 C11 14 15 12 18 13.4 C21 12 24 12.6 26.3 10.6 L26.3 17 L7.4 17 Z" fill="#979797"/><path d="M2 14 C2.4 9 4.4 5 7 3.4 C5.6 9 5.6 20 5 27 C4.6 30 4 32 3.6 34 C2 27 1.6 20 2 14 Z" fill="#c4c4c4"/><path d="M27.4 5 C30 7 31.4 11 31.4 15 C31.6 22 30.6 29 29.4 33 C28.6 28 28.6 12 27.4 5 Z" fill="#c4c4c4"/><path d="M8 22 C8.4 30 11 37 15 40.4 L19 41 L14 24 Z" fill="#787878"/><path d="M8 16.4 C12 14.8 22 15 26.3 17.3 C26.6 22 26.4 26 25.7 29.3 C24 34 21.4 38.4 18.3 40.8 C15.6 39.4 14.4 36 13.6 31 C13 27 11.6 27 9.4 25 C8.4 22 8 19 8 16.4 Z" fill="#262626"/><path d="M14 41 C9.5 45 7 52 6.6 58 C6.6 64 8 70 10 74 L24 74 C27 68 28.5 62 28 56 C27.5 49 25 44 21.5 41 L18.3 43 Z" fill="#9c9c9c"/><path d="M14 41 C9.5 45 7 52 6.6 58 C6.6 64 8 70 10 74 L13 74 C11 66 11 54 14 46 Z" fill="#8a8a8a"/><path d="M17.8 45 L22 44.4 C26 50 28 56 27 60 L24.4 62 L25 68 L21.4 70 L19 66 L14.6 62 L15.4 55 L17.6 51 Z" fill="#f0f0f0"/><path d="M17 68 L21.5 67 L22.6 74 L19.6 76 L17 73 Z" fill="#5a5a5a"/><path d="M10 73.4 L17 73 L19.6 76 L22.6 74 L23.4 74 L23 87.4 L11 88 Z" fill="#8c8c8c"/><path d="M12 87.6 L21.6 87 L20.6 107 L14 107 Z" fill="#b2b2b2"/><path d="M13.6 106.4 L16.8 106.4 L17 113.4 L10.4 112 Z" fill="#2e2e2e"/><path d="M17.6 106.4 L20.6 106.4 L20.8 114.4 L17.2 113.4 Z" fill="#2e2e2e"/></svg></div><div style="left:8px;top:406px;width:375px;height:20px;border:1px solid #2a2a2a;border-radius:4px;overflow:hidden;background:linear-gradient(#9a9a9a,#8a8a8a);box-shadow:0 1px 0 rgba(255,255,255,.1)"><div style="left:-1px;top:-1px;width:126px;height:20px;background:linear-gradient(#5680c2,#5c8ad0)"></div><div style="left:124px;top:-1px;width:1px;height:20px;background:#333"></div><div style="left:249px;top:-1px;width:1px;height:20px;background:#333"></div></div><div class="t" style="left:53px;top:411px;font-size:11px;color:#000;"><span style="letter-spacing:-0.32px">Texture</span></div><div class="t" style="left:174px;top:411px;font-size:11px;color:#000;"><span style="letter-spacing:-0.46px">Material</span></div><div class="t" style="left:308px;top:411px;font-size:11px;color:#000;"><span style="letter-spacing:-0.64px">Both</span></div><div style="left:11px;top:434px;width:14px;height:14px;background:linear-gradient(#565656,#383838);border:1px solid #262626;border-radius:4px;box-shadow:0 1px 0 rgba(255,255,255,.10)"></div><div class="t" style="left:30px;top:436px;font-size:11px;color:#000;"><span style="letter-spacing:-0.67px">Show</span><span style="letter-spacing:-0.50px"> </span><span style="letter-spacing:-0.66px">Alpha</span></div><div style="left:5px;top:458px;width:381px;height:1px;background:#404040"></div><div style="left:5px;top:459px;width:381px;height:1px;background:#8b8b8b"></div><svg style="left:13px;top:467px" width="8" height="8" viewBox="0 0 8 8"><path d="M0.2 0 L8 4 L0.2 8 Z" fill="#222"/></svg><div class="t" style="left:25px;top:465px;font-size:12px;color:#000;"><span style="letter-spacing:-0.43px">Colors</span></div><svg style="left:365px;top:461px" width="20" height="19" viewBox="0 0 20 19"><path d="M0 0 L17 17" stroke="#575757" stroke-width="1" fill="none"/><path d="M1.2 0 L17.6 16.4" stroke="#909090" stroke-width="1" fill="none"/><path d="M6 0 L17 11" stroke="#575757" stroke-width="1" fill="none"/><path d="M7.2 0 L17.6 10.4" stroke="#909090" stroke-width="1" fill="none"/><path d="M11 0 L17 6" stroke="#575757" stroke-width="1" fill="none"/><path d="M12.2 0 L17.6 5.4" stroke="#909090" stroke-width="1" fill="none"/></svg><div style="left:5px;top:482px;width:381px;height:1px;background:#404040"></div><div style="left:5px;top:483px;width:381px;height:1px;background:#8b8b8b"></div><svg style="left:13px;top:491px" width="8" height="8" viewBox="0 0 8 8"><path d="M0 0.2 L8 0.2 L4 8 Z" fill="#222"/></svg><div class="t" style="left:25px;top:489px;font-size:12px;color:#000;"><span style="letter-spacing:-0.52px">Image</span></div><svg style="left:365px;top:485px" width="20" height="19" viewBox="0 0 20 19"><path d="M0 0 L17 17" stroke="#575757" stroke-width="1" fill="none"/><path d="M1.2 0 L17.6 16.4" stroke="#909090" stroke-width="1" fill="none"/><path d="M6 0 L17 11" stroke="#575757" stroke-width="1" fill="none"/><path d="M7.2 0 L17.6 10.4" stroke="#909090" stroke-width="1" fill="none"/><path d="M11 0 L17 6" stroke="#575757" stroke-width="1" fill="none"/><path d="M12.2 0 L17.6 5.4" stroke="#909090" stroke-width="1" fill="none"/></svg><div style="left:8px;top:515px;width:375px;height:20px;border:1px solid #262626;border-radius:4px;overflow:hidden;background:#888;box-shadow:0 1px 0 rgba(255,255,255,.1)"><div style="left:-1px;top:-1px;width:31px;height:20px;background:linear-gradient(#585858,#3c3c3c)"></div><div style="left:30px;top:-1px;width:264px;height:20px;background:linear-gradient(#9c9c9c,#b8b8b8);border-left:1px solid #333"></div><div style="left:293px;top:-1px;width:21px;height:20px;background:linear-gradient(#8e8e8e,#7c7c7c);border-left:1px solid #333"></div><div style="left:313px;top:-1px;width:21px;height:20px;background:linear-gradient(#8e8e8e,#7c7c7c);border-left:1px solid #333"></div><div style="left:333px;top:-1px;width:21px;height:20px;background:linear-gradient(#8e8e8e,#7c7c7c);border-left:1px solid #333"></div><div style="left:353px;top:-1px;width:21px;height:20px;background:linear-gradient(#8e8e8e,#7c7c7c);border-left:1px solid #333"></div></div><svg style="left:14px;top:518px" width="12" height="14" viewBox="0 0 12 14"><path d="M3.4 -0.4 L12.4 -0.4 L12.4 14.4 L-0.4 14.4 L-0.4 3.4 Z" fill="#1c1c1c"/><path d="M3.6 0 L12 0 L12 14 L0 14 L0 3.6 Z" fill="#fcfcfc"/><path d="M4.2 1.2 L10.8 1.2 L10.8 8 L1.2 8 L1.2 4.2 Z" fill="#e8b2aa"/><path d="M1.2 4.2 L4.2 4.2 L4.2 1.2 L5.6 1.2 L5.6 5.2 L1.2 5.2 Z" fill="#6a4440"/><rect x="6.8" y="2.6" width="2.4" height="2.4" fill="#fffaf6"/><rect x="1.2" y="9" width="9.6" height="3.8" fill="#9a92c4"/><rect x="7" y="9" width="3.8" height="3.8" fill="#bcbce4"/><path d="M1.2 7.3 C3 6.9 4.4 8.1 6 7.7 C7.4 7.2 9 7.9 10.8 7.3 L10.8 9.2 L1.2 9.2 Z" fill="#131313"/><path d="M0 3.6 L3.6 3.6 L3.6 0 Z" fill="#fff"/></svg><div class="t" style="left:44px;top:520px;font-size:11px;color:#000;"><span style="letter-spacing:-0.79px">AbrazoShade</span>0102<span style="letter-spacing:-0.86px">.png</span></div><div class="t" style="left:309px;top:520px;font-size:11px;color:#000;"><span style="letter-spacing:-0.33px">F</span></div><svg style="left:324px;top:517px" width="16" height="16" viewBox="0 0 16 16"><path d="M6.4 2.8 L9.6 2.8 L9.6 6.4 L13.2 6.4 L13.2 9.6 L9.6 9.6 L9.6 13.2 L6.4 13.2 L6.4 9.6 L2.8 9.6 L2.8 6.4 L6.4 6.4 Z" fill="#f6f6f6" stroke="#1c1c1c" stroke-width="1"/></svg><svg style="left:344px;top:517px" width="16" height="16" viewBox="0 0 16 16"><path d="M1.4 13 L1.4 5 L5.4 5 L5.4 2 L13 2 L13 5 L14.6 5 L14.6 13 Z" fill="#cfc48a" stroke="#5a5430" stroke-width="0.9"/><rect x="6.6" y="3.2" width="5" height="3" fill="#f0f0f0"/><path d="M1.4 7.4 L14.6 7.4" stroke="#5a5430" stroke-width="0.8"/></svg><svg style="left:364px;top:517px" width="16" height="16" viewBox="0 0 16 16"><g transform="rotate(45 8 8)"><path d="M6.7 1.4 L9.3 1.4 L9.3 6.7 L14.6 6.7 L14.6 9.3 L9.3 9.3 L9.3 14.6 L6.7 14.6 L6.7 9.3 L1.4 9.3 L1.4 6.7 L6.7 6.7 Z" fill="#f6f6f6" stroke="#1c1c1c" stroke-width="1"/></g></svg><div class="t" style="left:13px;top:545px;font-size:11px;color:#000;"><span style="letter-spacing:-0.64px">Source:</span></div><div style="left:136px;top:540px;width:247px;height:20px;background:linear-gradient(#535353,#383838);border:1px solid #222;border-radius:4px;box-shadow:0 1px 0 rgba(255,255,255,.10)"></div><div class="t" style="left:142px;top:545px;font-size:11px;color:#fff;"><span style="letter-spacing:-0.64px">Single</span><span style="letter-spacing:-0.50px"> </span><span style="letter-spacing:-0.69px">Image</span></div><svg style="left:369px;top:543px" width="8" height="14" viewBox="0 0 8 14"><path d="M4 0.8 L7.4 6 L0.6 6 Z M4 13.2 L7.4 8 L0.6 8 Z" fill="#aaa"/></svg><div style="left:8px;top:565px;width:375px;height:20px;border:1px solid #262626;border-radius:4px;overflow:hidden;background:linear-gradient(#9c9c9c,#b8b8b8);box-shadow:0 1px 0 rgba(255,255,255,.1)"><div style="left:-1px;top:-1px;width:20px;height:20px;background:linear-gradient(#8e8e8e,#7c7c7c);border-right:1px solid #333"></div><div style="left:325px;top:-1px;width:25px;height:20px;background:linear-gradient(#8e8e8e,#7c7c7c);border-left:1px solid #333"></div><div style="left:349px;top:-1px;width:25px;height:20px;background:linear-gradient(#8e8e8e,#7c7c7c);border-left:1px solid #333"></div></div><svg style="left:11px;top:570px" width="16" height="13" viewBox="0 0 16 13"><path d="M0.4 5.4 L7 1 L15 4 L15 8 L8 12.4 L0.4 9 Z" fill="#e6dea8" stroke="#3a3824" stroke-width="0.8" stroke-linejoin="round"/><path d="M2.6 5.6 L7.2 2.6 L12.6 4.6 L8 7.8 Z" fill="#45412c"/><path d="M0.4 5.4 L8 8.6 L8 12.4 L0.4 9 Z" fill="#f2ecc0"/><path d="M8 8.6 L15 4 L15 8 L8 12.4 Z" fill="#c4bc84"/><path d="M0.4 5.4 L8 8.6 L15 4" fill="none" stroke="#fffbe0" stroke-width="0.7"/></svg><div class="t" style="left:32px;top:569px;font-size:11px;color:#000;"><span style="letter-spacing:-0.63px">arranko\Desktop\NiñaPlanAnimacion\AbrazoShade</span>0102<span style="letter-spacing:-0.86px">.png</span></div><svg style="left:338px;top:567px" width="16" height="16" viewBox="0 0 16 16"><path d="M1.4 13 L1.4 5 L5.4 5 L5.4 2 L13 2 L13 5 L14.6 5 L14.6 13 Z" fill="#cfc48a" stroke="#5a5430" stroke-width="0.9"/><rect x="6.6" y="3.2" width="5" height="3" fill="#f0f0f0"/><path d="M1.4 7.4 L14.6 7.4" stroke="#5a5430" stroke-width="0.8"/></svg><svg style="left:362px;top:567px" width="16" height="16" viewBox="0 0 16 16"><g fill="none" stroke="#1c1c1c" stroke-width="3.2"><path d="M3 7 C3 4 5 3.4 8 3.4 L11 3.4"/><path d="M13 9 C13 12 11 12.6 8 12.6 L5 12.6"/></g><g fill="none" stroke="#e8e8e8" stroke-width="1.6"><path d="M3 7 C3 4 5 3.4 8 3.4 L11 3.4"/><path d="M13 9 C13 12 11 12.6 8 12.6 L5 12.6"/></g><path d="M10.6 0.8 L14.2 3.4 L10.6 6 Z" fill="#e8e8e8" stroke="#1c1c1c" stroke-width="0.7"/><path d="M5.4 10 L1.8 12.6 L5.4 15.2 Z" fill="#e8e8e8" stroke="#1c1c1c" stroke-width="0.7"/></svg><div class="t" style="left:13px;top:595px;font-size:11px;color:#000;"><span style="letter-spacing:-0.69px">Image:</span><span style="letter-spacing:-0.50px"> </span><span style="letter-spacing:-0.59px">size</span><span style="letter-spacing:-0.50px"> </span>1280<span style="letter-spacing:-0.50px"> </span><span style="letter-spacing:-0.52px">x</span><span style="letter-spacing:-0.50px"> </span>720<span style="letter-spacing:-0.50px">,</span><span style="letter-spacing:-0.50px"> </span><span style="letter-spacing:-0.56px">RGBA</span><span style="letter-spacing:-0.50px"> </span><span style="letter-spacing:-0.64px">byte</span></div><div style="left:89px;top:241px;width:294px;height:374px;background:rgba(25,25,25,.9);border-radius:0 0 5px 5px;box-shadow:0 1px 3px rgba(0,0,0,.3)"><div class="t" style="left:5px;top:5px;font-size:11px;color:#fff;"><span style="letter-spacing:-0.68px">None</span></div><svg style="left:2px;top:25px" width="14" height="14" viewBox="0 0 14 14"><rect x="0.5" y="0.5" width="13" height="13" rx="1.2" fill="#fbf8f6" stroke="#2a2626" stroke-width="1"/><rect x="1.1" y="1.1" width="2.8" height="2.8" fill="#800c06"/><rect x="7.1" y="1.1" width="2.8" height="2.8" fill="#800c06"/><rect x="4.1" y="4.1" width="2.8" height="2.8" fill="#800c06"/><rect x="10.1" y="4.1" width="2.8" height="2.8" fill="#a03024"/><rect x="1.1" y="7.1" width="2.8" height="2.8" fill="#800c06"/><rect x="7.1" y="7.1" width="2.8" height="2.8" fill="#800c06"/><rect x="4.1" y="10.1" width="2.8" height="2.8" fill="#98241a"/><rect x="10.1" y="10.1" width="2.8" height="2.8" fill="#d08878"/></svg><div class="t" style="left:21px;top:27px;font-size:11px;color:#fff;"><span style="letter-spacing:-0.67px">Blend</span></div><svg style="left:2px;top:47px" width="14" height="14" viewBox="0 0 14 14"><rect x="0.5" y="0.5" width="13" height="13" rx="1.2" fill="#fbf8f6" stroke="#2a2626" stroke-width="1"/><rect x="1.1" y="1.1" width="2.8" height="2.8" fill="#800c06"/><rect x="7.1" y="1.1" width="2.8" height="2.8" fill="#800c06"/><rect x="4.1" y="4.1" width="2.8" height="2.8" fill="#800c06"/><rect x="10.1" y="4.1" width="2.8" height="2.8" fill="#a03024"/><rect x="1.1" y="7.1" width="2.8" height="2.8" fill="#800c06"/><rect x="7.1" y="7.1" width="2.8" height="2.8" fill="#800c06"/><rect x="4.1" y="10.1" width="2.8" height="2.8" fill="#98241a"/><rect x="10.1" y="10.1" width="2.8" height="2.8" fill="#d08878"/></svg><div class="t" style="left:21px;top:49px;font-size:11px;color:#fff;"><span style="letter-spacing:-0.70px">Clouds</span></div><svg style="left:2px;top:69px" width="14" height="14" viewBox="0 0 14 14"><rect x="0.5" y="0.5" width="13" height="13" rx="1.2" fill="#fbf8f6" stroke="#2a2626" stroke-width="1"/><rect x="1.1" y="1.1" width="2.8" height="2.8" fill="#800c06"/><rect x="7.1" y="1.1" width="2.8" height="2.8" fill="#800c06"/><rect x="4.1" y="4.1" width="2.8" height="2.8" fill="#800c06"/><rect x="10.1" y="4.1" width="2.8" height="2.8" fill="#a03024"/><rect x="1.1" y="7.1" width="2.8" height="2.8" fill="#800c06"/><rect x="7.1" y="7.1" width="2.8" height="2.8" fill="#800c06"/><rect x="4.1" y="10.1" width="2.8" height="2.8" fill="#98241a"/><rect x="10.1" y="10.1" width="2.8" height="2.8" fill="#d08878"/></svg><div class="t" style="left:21px;top:71px;font-size:11px;color:#fff;"><span style="letter-spacing:-0.54px">Distorted</span><span style="letter-spacing:-0.50px"> </span><span style="letter-spacing:-0.51px">Noise</span></div><svg style="left:3px;top:91px" width="12" height="14" viewBox="0 0 12 14"><path d="M3.4 -0.4 L12.4 -0.4 L12.4 14.4 L-0.4 14.4 L-0.4 3.4 Z" fill="#1c1c1c"/><path d="M3.6 0 L12 0 L12 14 L0 14 L0 3.6 Z" fill="#fcfcfc"/><path d="M4.2 1.2 L10.8 1.2 L10.8 8 L1.2 8 L1.2 4.2 Z" fill="#e8b2aa"/><path d="M1.2 4.2 L4.2 4.2 L4.2 1.2 L5.6 1.2 L5.6 5.2 L1.2 5.2 Z" fill="#6a4440"/><rect x="6.8" y="2.6" width="2.4" height="2.4" fill="#fffaf6"/><rect x="1.2" y="9" width="9.6" height="3.8" fill="#9a92c4"/><rect x="7" y="9" width="3.8" height="3.8" fill="#bcbce4"/><path d="M1.2 7.3 C3 6.9 4.4 8.1 6 7.7 C7.4 7.2 9 7.9 10.8 7.3 L10.8 9.2 L1.2 9.2 Z" fill="#131313"/><path d="M0 3.6 L3.6 3.6 L3.6 0 Z" fill="#fff"/></svg><div class="t" style="left:21px;top:93px;font-size:11px;color:#fff;"><span style="letter-spacing:-0.66px">Environment</span><span style="letter-spacing:-0.50px"> </span><span style="letter-spacing:-0.73px">Map</span></div><div style="left:1px;top:111px;width:293px;height:18px;background:linear-gradient(#6c9be0,#5179ba)"></div><svg style="left:3px;top:113px" width="12" height="14" viewBox="0 0 12 14"><path d="M3.4 -0.4 L12.4 -0.4 L12.4 14.4 L-0.4 14.4 L-0.4 3.4 Z" fill="#1c1c1c"/><path d="M3.6 0 L12 0 L12 14 L0 14 L0 3.6 Z" fill="#fcfcfc"/><path d="M4.2 1.2 L10.8 1.2 L10.8 8 L1.2 8 L1.2 4.2 Z" fill="#e8b2aa"/><path d="M1.2 4.2 L4.2 4.2 L4.2 1.2 L5.6 1.2 L5.6 5.2 L1.2 5.2 Z" fill="#6a4440"/><rect x="6.8" y="2.6" width="2.4" height="2.4" fill="#fffaf6"/><rect x="1.2" y="9" width="9.6" height="3.8" fill="#9a92c4"/><rect x="7" y="9" width="3.8" height="3.8" fill="#bcbce4"/><path d="M1.2 7.3 C3 6.9 4.4 8.1 6 7.7 C7.4 7.2 9 7.9 10.8 7.3 L10.8 9.2 L1.2 9.2 Z" fill="#131313"/><path d="M0 3.6 L3.6 3.6 L3.6 0 Z" fill="#fff"/></svg><div class="t" style="left:21px;top:115px;font-size:11px;color:#000;"><span style="letter-spacing:-0.69px">Image</span><span style="letter-spacing:-0.50px"> </span><span style="letter-spacing:-0.62px">or</span><span style="letter-spacing:-0.50px"> </span><span style="letter-spacing:-0.51px">Movie</span></div><svg style="left:2px;top:135px" width="14" height="14" viewBox="0 0 14 14"><rect x="0.5" y="0.5" width="13" height="13" rx="1.2" fill="#fbf8f6" stroke="#2a2626" stroke-width="1"/><rect x="1.1" y="1.1" width="2.8" height="2.8" fill="#800c06"/><rect x="7.1" y="1.1" width="2.8" height="2.8" fill="#800c06"/><rect x="4.1" y="4.1" width="2.8" height="2.8" fill="#800c06"/><rect x="10.1" y="4.1" width="2.8" height="2.8" fill="#a03024"/><rect x="1.1" y="7.1" width="2.8" height="2.8" fill="#800c06"/><rect x="7.1" y="7.1" width="2.8" height="2.8" fill="#800c06"/><rect x="4.1" y="10.1" width="2.8" height="2.8" fill="#98241a"/><rect x="10.1" y="10.1" width="2.8" height="2.8" fill="#d08878"/></svg><div class="t" style="left:21px;top:137px;font-size:11px;color:#fff;"><span style="letter-spacing:-0.46px">Magic</span></div><svg style="left:2px;top:157px" width="14" height="14" viewBox="0 0 14 14"><rect x="0.5" y="0.5" width="13" height="13" rx="1.2" fill="#fbf8f6" stroke="#2a2626" stroke-width="1"/><rect x="1.1" y="1.1" width="2.8" height="2.8" fill="#800c06"/><rect x="7.1" y="1.1" width="2.8" height="2.8" fill="#800c06"/><rect x="4.1" y="4.1" width="2.8" height="2.8" fill="#800c06"/><rect x="10.1" y="4.1" width="2.8" height="2.8" fill="#a03024"/><rect x="1.1" y="7.1" width="2.8" height="2.8" fill="#800c06"/><rect x="7.1" y="7.1" width="2.8" height="2.8" fill="#800c06"/><rect x="4.1" y="10.1" width="2.8" height="2.8" fill="#98241a"/><rect x="10.1" y="10.1" width="2.8" height="2.8" fill="#d08878"/></svg><div class="t" style="left:21px;top:159px;font-size:11px;color:#fff;"><span style="letter-spacing:-0.59px">Marble</span></div><svg style="left:2px;top:179px" width="14" height="14" viewBox="0 0 14 14"><rect x="0.5" y="0.5" width="13" height="13" rx="1.2" fill="#fbf8f6" stroke="#2a2626" stroke-width="1"/><rect x="1.1" y="1.1" width="2.8" height="2.8" fill="#800c06"/><rect x="7.1" y="1.1" width="2.8" height="2.8" fill="#800c06"/><rect x="4.1" y="4.1" width="2.8" height="2.8" fill="#800c06"/><rect x="10.1" y="4.1" width="2.8" height="2.8" fill="#a03024"/><rect x="1.1" y="7.1" width="2.8" height="2.8" fill="#800c06"/><rect x="7.1" y="7.1" width="2.8" height="2.8" fill="#800c06"/><rect x="4.1" y="10.1" width="2.8" height="2.8" fill="#98241a"/><rect x="10.1" y="10.1" width="2.8" height="2.8" fill="#d08878"/></svg><div class="t" style="left:21px;top:181px;font-size:11px;color:#fff;"><span style="letter-spacing:-0.71px">Musgrave</span></div><svg style="left:2px;top:201px" width="14" height="14" viewBox="0 0 14 14"><rect x="0.5" y="0.5" width="13" height="13" rx="1.2" fill="#fbf8f6" stroke="#2a2626" stroke-width="1"/><rect x="1.1" y="1.1" width="2.8" height="2.8" fill="#800c06"/><rect x="7.1" y="1.1" width="2.8" height="2.8" fill="#800c06"/><rect x="4.1" y="4.1" width="2.8" height="2.8" fill="#800c06"/><rect x="10.1" y="4.1" width="2.8" height="2.8" fill="#a03024"/><rect x="1.1" y="7.1" width="2.8" height="2.8" fill="#800c06"/><rect x="7.1" y="7.1" width="2.8" height="2.8" fill="#800c06"/><rect x="4.1" y="10.1" width="2.8" height="2.8" fill="#98241a"/><rect x="10.1" y="10.1" width="2.8" height="2.8" fill="#d08878"/></svg><div class="t" style="left:21px;top:203px;font-size:11px;color:#fff;"><span style="letter-spacing:-0.51px">Noise</span></div><svg style="left:2px;top:223px" width="14" height="14" viewBox="0 0 14 14"><rect x="0.5" y="0.5" width="13" height="13" rx="1.2" fill="#fbf8f6" stroke="#2a2626" stroke-width="1"/><rect x="1.1" y="1.1" width="2.8" height="2.8" fill="#800c06"/><rect x="7.1" y="1.1" width="2.8" height="2.8" fill="#800c06"/><rect x="4.1" y="4.1" width="2.8" height="2.8" fill="#800c06"/><rect x="10.1" y="4.1" width="2.8" height="2.8" fill="#a03024"/><rect x="1.1" y="7.1" width="2.8" height="2.8" fill="#800c06"/><rect x="7.1" y="7.1" width="2.8" height="2.8" fill="#800c06"/><rect x="4.1" y="10.1" width="2.8" height="2.8" fill="#98241a"/><rect x="10.1" y="10.1" width="2.8" height="2.8" fill="#d08878"/></svg><div class="t" style="left:21px;top:225px;font-size:11px;color:#fff;"><span style="letter-spacing:-0.47px">Point</span><span style="letter-spacing:-0.50px"> </span><span style="letter-spacing:-0.55px">Density</span></div><svg style="left:2px;top:245px" width="14" height="14" viewBox="0 0 14 14"><rect x="0.5" y="0.5" width="13" height="13" rx="1.2" fill="#fbf8f6" stroke="#2a2626" stroke-width="1"/><rect x="1.1" y="1.1" width="2.8" height="2.8" fill="#800c06"/><rect x="7.1" y="1.1" width="2.8" height="2.8" fill="#800c06"/><rect x="4.1" y="4.1" width="2.8" height="2.8" fill="#800c06"/><rect x="10.1" y="4.1" width="2.8" height="2.8" fill="#a03024"/><rect x="1.1" y="7.1" width="2.8" height="2.8" fill="#800c06"/><rect x="7.1" y="7.1" width="2.8" height="2.8" fill="#800c06"/><rect x="4.1" y="10.1" width="2.8" height="2.8" fill="#98241a"/><rect x="10.1" y="10.1" width="2.8" height="2.8" fill="#d08878"/></svg><div class="t" style="left:21px;top:247px;font-size:11px;color:#fff;"><span style="letter-spacing:-0.40px">Stucci</span></div><svg style="left:2px;top:267px" width="14" height="14" viewBox="0 0 14 14"><rect x="0.5" y="0.5" width="13" height="13" rx="1.2" fill="#fbf8f6" stroke="#2a2626" stroke-width="1"/><rect x="1.1" y="1.1" width="2.8" height="2.8" fill="#800c06"/><rect x="7.1" y="1.1" width="2.8" height="2.8" fill="#800c06"/><rect x="4.1" y="4.1" width="2.8" height="2.8" fill="#800c06"/><rect x="10.1" y="4.1" width="2.8" height="2.8" fill="#a03024"/><rect x="1.1" y="7.1" width="2.8" height="2.8" fill="#800c06"/><rect x="7.1" y="7.1" width="2.8" height="2.8" fill="#800c06"/><rect x="4.1" y="10.1" width="2.8" height="2.8" fill="#98241a"/><rect x="10.1" y="10.1" width="2.8" height="2.8" fill="#d08878"/></svg><div class="t" style="left:21px;top:269px;font-size:11px;color:#fff;"><span style="letter-spacing:-0.46px">Voronoi</span></div><svg style="left:2px;top:289px" width="14" height="14" viewBox="0 0 14 14"><rect x="0.5" y="0.5" width="13" height="13" rx="1.2" fill="#fbf8f6" stroke="#2a2626" stroke-width="1"/><rect x="1.1" y="1.1" width="2.8" height="2.8" fill="#800c06"/><rect x="7.1" y="1.1" width="2.8" height="2.8" fill="#800c06"/><rect x="4.1" y="4.1" width="2.8" height="2.8" fill="#800c06"/><rect x="10.1" y="4.1" width="2.8" height="2.8" fill="#a03024"/><rect x="1.1" y="7.1" width="2.8" height="2.8" fill="#800c06"/><rect x="7.1" y="7.1" width="2.8" height="2.8" fill="#800c06"/><rect x="4.1" y="10.1" width="2.8" height="2.8" fill="#98241a"/><rect x="10.1" y="10.1" width="2.8" height="2.8" fill="#d08878"/></svg><div class="t" style="left:21px;top:291px;font-size:11px;color:#fff;"><span style="letter-spacing:-0.21px">Voxel</span><span style="letter-spacing:-0.50px"> </span><span style="letter-spacing:-0.56px">Data</span></div><svg style="left:2px;top:311px" width="14" height="14" viewBox="0 0 14 14"><rect x="0.5" y="0.5" width="13" height="13" rx="1.2" fill="#fbf8f6" stroke="#2a2626" stroke-width="1"/><rect x="1.1" y="1.1" width="2.8" height="2.8" fill="#800c06"/><rect x="7.1" y="1.1" width="2.8" height="2.8" fill="#800c06"/><rect x="4.1" y="4.1" width="2.8" height="2.8" fill="#800c06"/><rect x="10.1" y="4.1" width="2.8" height="2.8" fill="#a03024"/><rect x="1.1" y="7.1" width="2.8" height="2.8" fill="#800c06"/><rect x="7.1" y="7.1" width="2.8" height="2.8" fill="#800c06"/><rect x="4.1" y="10.1" width="2.8" height="2.8" fill="#98241a"/><rect x="10.1" y="10.1" width="2.8" height="2.8" fill="#d08878"/></svg><div class="t" style="left:21px;top:313px;font-size:11px;color:#fff;"><span style="letter-spacing:-0.67px">Wood</span></div><svg style="left:2px;top:333px" width="14" height="14" viewBox="0 0 14 14"><rect x="0.5" y="0.5" width="13" height="13" rx="1.2" fill="#fbf8f6" stroke="#2a2626" stroke-width="1"/><rect x="1.1" y="1.1" width="2.8" height="2.8" fill="#800c06"/><rect x="7.1" y="1.1" width="2.8" height="2.8" fill="#800c06"/><rect x="4.1" y="4.1" width="2.8" height="2.8" fill="#800c06"/><rect x="10.1" y="4.1" width="2.8" height="2.8" fill="#a03024"/><rect x="1.1" y="7.1" width="2.8" height="2.8" fill="#800c06"/><rect x="7.1" y="7.1" width="2.8" height="2.8" fill="#800c06"/><rect x="4.1" y="10.1" width="2.8" height="2.8" fill="#98241a"/><rect x="10.1" y="10.1" width="2.8" height="2.8" fill="#d08878"/></svg><div class="t" style="left:21px;top:335px;font-size:11px;color:#fff;"><span style="letter-spacing:-0.63px">Ocean</span></div><div class="t" style="left:5px;top:354px;font-size:11px;color:#a0a0a0;"><span style="letter-spacing:-0.32px">Type</span></div></div>
</div>
<!-- PANEL 3 -->
<div class="abs" style="left:491px;top:76px;width:402px;height:387px;background:#727272;overflow:hidden">
<div style="left:8px;top:8px;width:14px;height:14px;background:linear-gradient(#565656,#383838);border:1px solid #262626;border-radius:4px;box-shadow:0 1px 0 rgba(255,255,255,.10)"></div><div class="t" style="left:27px;top:10px;font-size:11px;color:#000;"><span style="letter-spacing:-0.36px">Fields</span></div><div style="left:5px;top:27px;width:187px;height:20px;background:linear-gradient(#5f7499,#6b81a7);border:1px solid #4c4e52;border-radius:4px 0 0 4px"></div><div class="t" style="left:71px;top:32px;font-size:11px;color:#33363c;"><span style="letter-spacing:-0.66px">Upper</span><span style="letter-spacing:-0.50px"> </span><span style="letter-spacing:-0.23px">First</span></div><div style="left:191px;top:27px;width:190px;height:20px;background:linear-gradient(#646464,#585858);border:1px solid #4c4c4c;border-radius:0 4px 4px 0"></div><div class="t" style="left:258px;top:32px;font-size:11px;color:#b4b4b4;"><span style="letter-spacing:-0.39px">Lower</span><span style="letter-spacing:-0.50px"> </span><span style="letter-spacing:-0.23px">First</span></div><div style="left:8px;top:55px;width:14px;height:14px;background:linear-gradient(#3c3c3c,#525252);border:1px solid #262626;border-radius:4px;box-shadow:0 1px 0 rgba(255,255,255,.10)"></div><svg style="left:8px;top:52px" width="18" height="18" viewBox="0 0 18 18"><path d="M3.6 8.6 L7 12.2 L13.6 3.2" fill="none" stroke="#f4f4f4" stroke-width="1.6" stroke-linecap="butt" stroke-linejoin="miter"/></svg><div class="t" style="left:27px;top:57px;font-size:11px;color:#fff;"><span style="letter-spacing:-0.47px">Premultiply</span></div><div style="left:199px;top:55px;width:14px;height:14px;background:linear-gradient(#565656,#383838);border:1px solid #262626;border-radius:4px;box-shadow:0 1px 0 rgba(255,255,255,.10)"></div><div class="t" style="left:218px;top:57px;font-size:11px;color:#000;"><span style="letter-spacing:-0.55px">Color</span><span style="letter-spacing:-0.50px"> </span><span style="letter-spacing:-0.52px">Unpremultiply</span></div><div style="left:2px;top:79px;width:381px;height:1px;background:#404040"></div><div style="left:2px;top:80px;width:381px;height:1px;background:#8b8b8b"></div><svg style="left:10px;top:88px" width="8" height="8" viewBox="0 0 8 8"><path d="M0.2 0 L8 4 L0.2 8 Z" fill="#222"/></svg><div class="t" style="left:22px;top:86px;font-size:12px;color:#000;"><span style="letter-spacing:-0.52px">Image</span><span style="letter-spacing:-0.81px"> </span><span style="letter-spacing:-0.52px">Sampling</span></div><svg style="left:362px;top:82px" width="20" height="19" viewBox="0 0 20 19"><path d="M0 0 L17 17" stroke="#575757" stroke-width="1" fill="none"/><path d="M1.2 0 L17.6 16.4" stroke="#909090" stroke-width="1" fill="none"/><path d="M6 0 L17 11" stroke="#575757" stroke-width="1" fill="none"/><path d="M7.2 0 L17.6 10.4" stroke="#909090" stroke-width="1" fill="none"/><path d="M11 0 L17 6" stroke="#575757" stroke-width="1" fill="none"/><path d="M12.2 0 L17.6 5.4" stroke="#909090" stroke-width="1" fill="none"/></svg><div style="left:2px;top:103px;width:381px;height:1px;background:#404040"></div><div style="left:2px;top:104px;width:381px;height:1px;background:#8b8b8b"></div><svg style="left:10px;top:112px" width="8" height="8" viewBox="0 0 8 8"><path d="M0.2 0 L8 4 L0.2 8 Z" fill="#222"/></svg><div class="t" style="left:22px;top:110px;font-size:12px;color:#000;"><span style="letter-spacing:-0.52px">Image</span><span style="letter-spacing:-0.81px"> </span><span style="letter-spacing:-0.50px">Mapping</span></div><svg style="left:362px;top:106px" width="20" height="19" viewBox="0 0 20 19"><path d="M0 0 L17 17" stroke="#575757" stroke-width="1" fill="none"/><path d="M1.2 0 L17.6 16.4" stroke="#909090" stroke-width="1" fill="none"/><path d="M6 0 L17 11" stroke="#575757" stroke-width="1" fill="none"/><path d="M7.2 0 L17.6 10.4" stroke="#909090" stroke-width="1" fill="none"/><path d="M11 0 L17 6" stroke="#575757" stroke-width="1" fill="none"/><path d="M12.2 0 L17.6 5.4" stroke="#909090" stroke-width="1" fill="none"/></svg><div style="left:2px;top:127px;width:381px;height:1px;background:#404040"></div><div style="left:2px;top:128px;width:381px;height:1px;background:#8b8b8b"></div><svg style="left:10px;top:136px" width="8" height="8" viewBox="0 0 8 8"><path d="M0.2 0 L8 4 L0.2 8 Z" fill="#222"/></svg><div class="t" style="left:22px;top:134px;font-size:12px;color:#000;"><span style="letter-spacing:-0.50px">Mapping</span></div><svg style="left:362px;top:130px" width="20" height="19" viewBox="0 0 20 19"><path d="M0 0 L17 17" stroke="#575757" stroke-width="1" fill="none"/><path d="M1.2 0 L17.6 16.4" stroke="#909090" stroke-width="1" fill="none"/><path d="M6 0 L17 11" stroke="#575757" stroke-width="1" fill="none"/><path d="M7.2 0 L17.6 10.4" stroke="#909090" stroke-width="1" fill="none"/><path d="M11 0 L17 6" stroke="#575757" stroke-width="1" fill="none"/><path d="M12.2 0 L17.6 5.4" stroke="#909090" stroke-width="1" fill="none"/></svg><div style="left:2px;top:151px;width:381px;height:1px;background:#404040"></div><div style="left:2px;top:152px;width:381px;height:1px;background:#8b8b8b"></div><svg style="left:10px;top:160px" width="8" height="8" viewBox="0 0 8 8"><path d="M0 0.2 L8 0.2 L4 8 Z" fill="#222"/></svg><div class="t" style="left:22px;top:158px;font-size:12px;color:#000;"><span style="letter-spacing:-0.48px">Influence</span></div><svg style="left:362px;top:154px" width="20" height="19" viewBox="0 0 20 19"><path d="M0 0 L17 17" stroke="#575757" stroke-width="1" fill="none"/><path d="M1.2 0 L17.6 16.4" stroke="#909090" stroke-width="1" fill="none"/><path d="M6 0 L17 11" stroke="#575757" stroke-width="1" fill="none"/><path d="M7.2 0 L17.6 10.4" stroke="#909090" stroke-width="1" fill="none"/><path d="M11 0 L17 6" stroke="#575757" stroke-width="1" fill="none"/><path d="M12.2 0 L17.6 5.4" stroke="#909090" stroke-width="1" fill="none"/></svg><div class="t" style="left:10px;top:189px;font-size:11px;color:#000;"><span style="letter-spacing:-0.66px">Diffuse:</span></div><div class="t" style="left:201px;top:189px;font-size:11px;color:#000;"><span style="letter-spacing:-0.80px">Shading:</span></div><div style="left:8px;top:209px;width:14px;height:14px;background:linear-gradient(#565656,#383838);border:1px solid #262626;border-radius:4px;box-shadow:0 1px 0 rgba(255,255,255,.10)"></div><div style="left:25px;top:206px;width:163px;height:20px;background:linear-gradient(#6b6b6b,#767676);border:1px solid #5a5a5a;border-radius:10px;overflow:hidden;box-shadow:none"></div><div class="t" style="left:66px;top:211px;font-size:11px;color:#484848;"><span style="letter-spacing:-0.48px">Intensity:</span><span style="letter-spacing:-0.50px"> </span>1<span style="letter-spacing:-0.50px">.</span>000</div><div style="left:199px;top:209px;width:14px;height:14px;background:linear-gradient(#565656,#383838);border:1px solid #262626;border-radius:4px;box-shadow:0 1px 0 rgba(255,255,255,.10)"></div><div style="left:216px;top:206px;width:164px;height:20px;background:linear-gradient(#6b6b6b,#767676);border:1px solid #5a5a5a;border-radius:10px;overflow:hidden;box-shadow:none"></div><div class="t" style="left:258px;top:211px;font-size:11px;color:#484848;"><span style="letter-spacing:-0.63px">Ambient:</span><span style="letter-spacing:-0.50px"> </span>1<span style="letter-spacing:-0.50px">.</span>000</div><div style="left:8px;top:231px;width:14px;height:14px;background:linear-gradient(#3c3c3c,#525252);border:1px solid #262626;border-radius:4px;box-shadow:0 1px 0 rgba(255,255,255,.10)"></div><svg style="left:8px;top:228px" width="18" height="18" viewBox="0 0 18 18"><path d="M3.6 8.6 L7 12.2 L13.6 3.2" fill="none" stroke="#f4f4f4" stroke-width="1.6" stroke-linecap="butt" stroke-linejoin="miter"/></svg><div style="left:25px;top:228px;width:163px;height:20px;background:linear-gradient(#666,#7e7e7e);border:1px solid #323232;border-radius:10px;overflow:hidden;box-shadow:0 1px 0 rgba(255,255,255,.12)"></div><div class="t" style="left:75px;top:233px;font-size:11px;color:#000;"><span style="letter-spacing:-0.54px">Color:</span><span style="letter-spacing:-0.50px"> </span>1<span style="letter-spacing:-0.50px">.</span>000</div><div style="left:199px;top:231px;width:14px;height:14px;background:linear-gradient(#565656,#383838);border:1px solid #262626;border-radius:4px;box-shadow:0 1px 0 rgba(255,255,255,.10)"></div><div style="left:216px;top:228px;width:164px;height:20px;background:linear-gradient(#6b6b6b,#767676);border:1px solid #5a5a5a;border-radius:10px;overflow:hidden;box-shadow:none"></div><div class="t" style="left:268px;top:233px;font-size:11px;color:#484848;"><span style="letter-spacing:-0.55px">Emit:</span><span style="letter-spacing:-0.50px"> </span>1<span style="letter-spacing:-0.50px">.</span>000</div><div style="left:8px;top:253px;width:14px;height:14px;background:linear-gradient(#3c3c3c,#525252);border:1px solid #262626;border-radius:4px;box-shadow:0 1px 0 rgba(255,255,255,.10)"></div><svg style="left:8px;top:250px" width="18" height="18" viewBox="0 0 18 18"><path d="M3.6 8.6 L7 12.2 L13.6 3.2" fill="none" stroke="#f4f4f4" stroke-width="1.6" stroke-linecap="butt" stroke-linejoin="miter"/></svg><div style="left:25px;top:250px;width:163px;height:20px;background:linear-gradient(#666,#7e7e7e);border:1px solid #323232;border-radius:10px;overflow:hidden;box-shadow:0 1px 0 rgba(255,255,255,.12)"></div><div class="t" style="left:74px;top:255px;font-size:11px;color:#000;"><span style="letter-spacing:-0.66px">Alpha:</span><span style="letter-spacing:-0.50px"> </span>1<span style="letter-spacing:-0.50px">.</span>000</div><div style="left:199px;top:253px;width:14px;height:14px;background:linear-gradient(#565656,#383838);border:1px solid #262626;border-radius:4px;box-shadow:0 1px 0 rgba(255,255,255,.10)"></div><div style="left:216px;top:250px;width:164px;height:20px;background:linear-gradient(#6b6b6b,#767676);border:1px solid #5a5a5a;border-radius:10px;overflow:hidden;box-shadow:none"></div><div class="t" style="left:264px;top:255px;font-size:11px;color:#484848;"><span style="letter-spacing:-0.42px">Mirror:</span><span style="letter-spacing:-0.50px"> </span>1<span style="letter-spacing:-0.50px">.</span>000</div><div style="left:8px;top:275px;width:14px;height:14px;background:linear-gradient(#565656,#383838);border:1px solid #262626;border-radius:4px;box-shadow:0 1px 0 rgba(255,255,255,.10)"></div><div style="left:25px;top:272px;width:163px;height:20px;background:linear-gradient(#6b6b6b,#767676);border:1px solid #5a5a5a;border-radius:10px;overflow:hidden;box-shadow:none"></div><div class="t" style="left:55px;top:277px;font-size:11px;color:#484848;"><span style="letter-spacing:-0.41px">Translucency:</span><span style="letter-spacing:-0.50px"> </span>1<span style="letter-spacing:-0.50px">.</span>000</div><div style="left:199px;top:275px;width:14px;height:14px;background:linear-gradient(#565656,#383838);border:1px solid #262626;border-radius:4px;box-shadow:0 1px 0 rgba(255,255,255,.10)"></div><div style="left:216px;top:272px;width:164px;height:20px;background:linear-gradient(#6b6b6b,#767676);border:1px solid #5a5a5a;border-radius:10px;overflow:hidden;box-shadow:none"></div><div class="t" style="left:253px;top:277px;font-size:11px;color:#484848;"><span style="letter-spacing:-0.55px">Ray</span><span style="letter-spacing:-0.50px"> </span><span style="letter-spacing:-0.42px">Mirror:</span><span style="letter-spacing:-0.50px"> </span>1<span style="letter-spacing:-0.50px">.</span>000</div><div class="t" style="left:10px;top:299px;font-size:11px;color:#000;"><span style="letter-spacing:-0.62px">Specular:</span></div><div class="t" style="left:201px;top:299px;font-size:11px;color:#000;"><span style="letter-spacing:-0.53px">Geometry:</span></div><div style="left:8px;top:319px;width:14px;height:14px;background:linear-gradient(#565656,#383838);border:1px solid #262626;border-radius:4px;box-shadow:0 1px 0 rgba(255,255,255,.10)"></div><div style="left:25px;top:316px;width:163px;height:20px;background:linear-gradient(#6b6b6b,#767676);border:1px solid #5a5a5a;border-radius:10px;overflow:hidden;box-shadow:none"></div><div class="t" style="left:66px;top:321px;font-size:11px;color:#484848;"><span style="letter-spacing:-0.48px">Intensity:</span><span style="letter-spacing:-0.50px"> </span>1<span style="letter-spacing:-0.50px">.</span>000</div><div style="left:199px;top:319px;width:14px;height:14px;background:linear-gradient(#565656,#383838);border:1px solid #262626;border-radius:4px;box-shadow:0 1px 0 rgba(255,255,255,.10)"></div><div style="left:216px;top:316px;width:164px;height:20px;background:linear-gradient(#6b6b6b,#767676);border:1px solid #5a5a5a;border-radius:10px;overflow:hidden;box-shadow:none"><div style="left:100px;top:0px;width:62px;height:18px;background:linear-gradient(#7e7e7e,#8c8c8c)"></div></div><div class="t" style="left:261px;top:321px;font-size:11px;color:#484848;"><span style="letter-spacing:-0.50px">Normal:</span><span style="letter-spacing:-0.50px"> </span>1<span style="letter-spacing:-0.50px">.</span>000</div><div style="left:8px;top:341px;width:14px;height:14px;background:linear-gradient(#565656,#383838);border:1px solid #262626;border-radius:4px;box-shadow:0 1px 0 rgba(255,255,255,.10)"></div><div style="left:25px;top:338px;width:163px;height:20px;background:linear-gradient(#6b6b6b,#767676);border:1px solid #5a5a5a;border-radius:10px;overflow:hidden;box-shadow:none"></div><div class="t" style="left:75px;top:343px;font-size:11px;color:#484848;"><span style="letter-spacing:-0.54px">Color:</span><span style="letter-spacing:-0.50px"> </span>1<span style="letter-spacing:-0.50px">.</span>000</div><div style="left:199px;top:341px;width:14px;height:14px;background:linear-gradient(#565656,#383838);border:1px solid #262626;border-radius:4px;box-shadow:0 1px 0 rgba(255,255,255,.10)"></div><div style="left:216px;top:338px;width:164px;height:20px;background:linear-gradient(#6b6b6b,#767676);border:1px solid #5a5a5a;border-radius:10px;overflow:hidden;box-shadow:none"><div style="left:9px;top:0px;width:153px;height:18px;background:linear-gradient(#7e7e7e,#8c8c8c)"></div></div><div class="t" style="left:266px;top:343px;font-size:11px;color:#484848;"><span style="letter-spacing:-0.62px">Warp:</span><span style="letter-spacing:-0.50px"> </span>0<span style="letter-spacing:-0.50px">.</span>000</div><div style="left:8px;top:363px;width:14px;height:14px;background:linear-gradient(#565656,#383838);border:1px solid #262626;border-radius:4px;box-shadow:0 1px 0 rgba(255,255,255,.10)"></div><div style="left:25px;top:360px;width:163px;height:20px;background:linear-gradient(#6b6b6b,#767676);border:1px solid #5a5a5a;border-radius:10px;overflow:hidden;box-shadow:none"></div><div class="t" style="left:65px;top:365px;font-size:11px;color:#484848;"><span style="letter-spacing:-0.69px">Hardness:</span><span style="letter-spacing:-0.50px"> </span>1<span style="letter-spacing:-0.50px">.</span>000</div><div style="left:199px;top:363px;width:14px;height:14px;background:linear-gradient(#565656,#383838);border:1px solid #262626;border-radius:4px;box-shadow:0 1px 0 rgba(255,255,255,.10)"></div><div style="left:216px;top:360px;width:164px;height:20px;background:linear-gradient(#6b6b6b,#767676);border:1px solid #5a5a5a;border-radius:10px;overflow:hidden;box-shadow:none"><div style="left:100px;top:0px;width:62px;height:18px;background:linear-gradient(#7e7e7e,#8c8c8c)"></div></div><div class="t" style="left:258px;top:365px;font-size:11px;color:#484848;"><span style="letter-spacing:-0.51px">Displace:</span><span style="letter-spacing:-0.50px"> </span>0<span style="letter-spacing:-0.50px">.</span>200</div><div style="left:388px;top:0px;width:14px;height:387px;background:linear-gradient(to right,#555,#646464)"></div><div style="left:401px;top:0px;width:1px;height:387px;background:#909090"></div><div style="left:400px;top:0px;width:1px;height:387px;background:#4a4a4a"></div><div style="left:388px;top:150px;width:13px;height:260px;background:linear-gradient(to right,#a2a2a2,#747474);border:1px solid #3a3a3a;border-radius:6px"></div>
</div>
<!-- PANEL 4 -->
<div class="abs" style="left:490px;top:537px;width:403px;height:297px;background:#727272;overflow:hidden">
<div style="left:0px;top:0px;width:389px;height:1px;background:#8a8a8a"></div><div style="left:2px;top:1px;width:382px;height:1px;background:#404040"></div><div style="left:2px;top:2px;width:382px;height:1px;background:#8b8b8b"></div><svg style="left:10px;top:10px" width="8" height="8" viewBox="0 0 8 8"><path d="M0 0.2 L8 0.2 L4 8 Z" fill="#222"/></svg><div class="t" style="left:22px;top:8px;font-size:12px;color:#000;"><span style="letter-spacing:-0.43px">Game</span><span style="letter-spacing:-0.81px"> </span><span style="letter-spacing:-0.53px">Settings</span></div><svg style="left:362px;top:4px" width="20" height="19" viewBox="0 0 20 19"><path d="M0 0 L17 17" stroke="#575757" stroke-width="1" fill="none"/><path d="M1.2 0 L17.6 16.4" stroke="#909090" stroke-width="1" fill="none"/><path d="M6 0 L17 11" stroke="#575757" stroke-width="1" fill="none"/><path d="M7.2 0 L17.6 10.4" stroke="#909090" stroke-width="1" fill="none"/><path d="M11 0 L17 6" stroke="#575757" stroke-width="1" fill="none"/><path d="M12.2 0 L17.6 5.4" stroke="#909090" stroke-width="1" fill="none"/></svg><div style="left:8px;top:37px;width:14px;height:14px;background:linear-gradient(#3c3c3c,#525252);border:1px solid #262626;border-radius:4px;box-shadow:0 1px 0 rgba(255,255,255,.10)"></div><svg style="left:8px;top:34px" width="18" height="18" viewBox="0 0 18 18"><path d="M3.6 8.6 L7 12.2 L13.6 3.2" fill="none" stroke="#f4f4f4" stroke-width="1.6" stroke-linecap="butt" stroke-linejoin="miter"/></svg><div class="t" style="left:27px;top:39px;font-size:11px;color:#fff;"><span style="letter-spacing:-0.52px">Backface</span><span style="letter-spacing:-0.50px"> </span><span style="letter-spacing:-0.54px">Culling</span></div><div style="left:135px;top:37px;width:14px;height:14px;background:linear-gradient(#565656,#383838);border:1px solid #262626;border-radius:4px;box-shadow:0 1px 0 rgba(255,255,255,.10)"></div><div class="t" style="left:154px;top:39px;font-size:11px;color:#000;"><span style="letter-spacing:-0.49px">Invisible</span></div><div style="left:262px;top:37px;width:14px;height:14px;background:linear-gradient(#565656,#383838);border:1px solid #262626;border-radius:4px;box-shadow:0 1px 0 rgba(255,255,255,.10)"></div><div class="t" style="left:281px;top:39px;font-size:11px;color:#000;"><span style="letter-spacing:-0.06px">Text</span></div><div class="t" style="left:10px;top:64px;font-size:11px;color:#000;"><span style="letter-spacing:-0.66px">Alpha</span><span style="letter-spacing:-0.50px"> </span><span style="letter-spacing:-0.67px">Blend:</span></div><div class="t" style="left:201px;top:64px;font-size:11px;color:#000;"><span style="letter-spacing:-0.21px">Face</span><span style="letter-spacing:-0.50px"> </span><span style="letter-spacing:-0.57px">Orientation:</span></div><div style="left:5px;top:84px;width:183px;height:20px;background:linear-gradient(#535353,#383838);border:1px solid #222;border-radius:4px;box-shadow:0 1px 0 rgba(255,255,255,.10)"></div><div class="t" style="left:10px;top:89px;font-size:11px;color:#fff;"><span style="letter-spacing:-0.85px">Opaque</span></div><svg style="left:174px;top:87px" width="8" height="14" viewBox="0 0 8 14"><path d="M4 0.8 L7.4 6 L0.6 6 Z M4 13.2 L7.4 8 L0.6 8 Z" fill="#aaa"/></svg><div style="left:196px;top:84px;width:184px;height:20px;background:linear-gradient(#535353,#383838);border:1px solid #222;border-radius:4px;box-shadow:0 1px 0 rgba(255,255,255,.10)"></div><div class="t" style="left:201px;top:89px;font-size:11px;color:#fff;"><span style="letter-spacing:-0.47px">Normal</span></div><svg style="left:366px;top:87px" width="8" height="14" viewBox="0 0 8 14"><path d="M4 0.8 L7.4 6 L0.6 6 Z M4 13.2 L7.4 8 L0.6 8 Z" fill="#aaa"/></svg><div style="left:2px;top:111px;width:382px;height:1px;background:#404040"></div><div style="left:2px;top:112px;width:382px;height:1px;background:#8b8b8b"></div><svg style="left:10px;top:120px" width="8" height="8" viewBox="0 0 8 8"><path d="M0.2 0 L8 4 L0.2 8 Z" fill="#222"/></svg><div style="left:22px;top:117px;width:14px;height:14px;background:linear-gradient(#565656,#383838);border:1px solid #262626;border-radius:4px;box-shadow:0 1px 0 rgba(255,255,255,.10)"></div><div class="t" style="left:42px;top:118px;font-size:12px;color:#000;"><span style="letter-spacing:-0.34px">Physics</span></div><svg style="left:362px;top:114px" width="20" height="19" viewBox="0 0 20 19"><path d="M0 0 L17 17" stroke="#575757" stroke-width="1" fill="none"/><path d="M1.2 0 L17.6 16.4" stroke="#909090" stroke-width="1" fill="none"/><path d="M6 0 L17 11" stroke="#575757" stroke-width="1" fill="none"/><path d="M7.2 0 L17.6 10.4" stroke="#909090" stroke-width="1" fill="none"/><path d="M11 0 L17 6" stroke="#575757" stroke-width="1" fill="none"/><path d="M12.2 0 L17.6 5.4" stroke="#909090" stroke-width="1" fill="none"/></svg><div style="left:2px;top:135px;width:382px;height:1px;background:#404040"></div><div style="left:2px;top:136px;width:382px;height:1px;background:#8b8b8b"></div><svg style="left:10px;top:144px" width="8" height="8" viewBox="0 0 8 8"><path d="M0.2 0 L8 4 L0.2 8 Z" fill="#222"/></svg><div class="t" style="left:22px;top:142px;font-size:12px;color:#000;"><span style="letter-spacing:-0.47px">Options</span></div><svg style="left:362px;top:138px" width="20" height="19" viewBox="0 0 20 19"><path d="M0 0 L17 17" stroke="#575757" stroke-width="1" fill="none"/><path d="M1.2 0 L17.6 16.4" stroke="#909090" stroke-width="1" fill="none"/><path d="M6 0 L17 11" stroke="#575757" stroke-width="1" fill="none"/><path d="M7.2 0 L17.6 10.4" stroke="#909090" stroke-width="1" fill="none"/><path d="M11 0 L17 6" stroke="#575757" stroke-width="1" fill="none"/><path d="M12.2 0 L17.6 5.4" stroke="#909090" stroke-width="1" fill="none"/></svg><div style="left:2px;top:159px;width:382px;height:1px;background:#404040"></div><div style="left:2px;top:160px;width:382px;height:1px;background:#8b8b8b"></div><svg style="left:10px;top:168px" width="8" height="8" viewBox="0 0 8 8"><path d="M0.2 0 L8 4 L0.2 8 Z" fill="#222"/></svg><div class="t" style="left:22px;top:166px;font-size:12px;color:#000;"><span style="letter-spacing:-0.56px">Shadow</span></div><svg style="left:362px;top:162px" width="20" height="19" viewBox="0 0 20 19"><path d="M0 0 L17 17" stroke="#575757" stroke-width="1" fill="none"/><path d="M1.2 0 L17.6 16.4" stroke="#909090" stroke-width="1" fill="none"/><path d="M6 0 L17 11" stroke="#575757" stroke-width="1" fill="none"/><path d="M7.2 0 L17.6 10.4" stroke="#909090" stroke-width="1" fill="none"/><path d="M11 0 L17 6" stroke="#575757" stroke-width="1" fill="none"/><path d="M12.2 0 L17.6 5.4" stroke="#909090" stroke-width="1" fill="none"/></svg><div style="left:2px;top:183px;width:382px;height:1px;background:#404040"></div><div style="left:2px;top:184px;width:382px;height:1px;background:#8b8b8b"></div><svg style="left:10px;top:192px" width="8" height="8" viewBox="0 0 8 8"><path d="M0 0.2 L8 0.2 L4 8 Z" fill="#222"/></svg><div style="left:22px;top:189px;width:14px;height:14px;background:linear-gradient(#3c3c3c,#525252);border:1px solid #262626;border-radius:4px;box-shadow:0 1px 0 rgba(255,255,255,.10)"></div><svg style="left:22px;top:186px" width="18" height="18" viewBox="0 0 18 18"><path d="M3.6 8.6 L7 12.2 L13.6 3.2" fill="none" stroke="#f4f4f4" stroke-width="1.6" stroke-linecap="butt" stroke-linejoin="miter"/></svg><div class="t" style="left:42px;top:190px;font-size:12px;color:#000;"><span style="letter-spacing:-0.34px">Transparency</span></div><svg style="left:362px;top:186px" width="20" height="19" viewBox="0 0 20 19"><path d="M0 0 L17 17" stroke="#575757" stroke-width="1" fill="none"/><path d="M1.2 0 L17.6 16.4" stroke="#909090" stroke-width="1" fill="none"/><path d="M6 0 L17 11" stroke="#575757" stroke-width="1" fill="none"/><path d="M7.2 0 L17.6 10.4" stroke="#909090" stroke-width="1" fill="none"/><path d="M11 0 L17 6" stroke="#575757" stroke-width="1" fill="none"/><path d="M12.2 0 L17.6 5.4" stroke="#909090" stroke-width="1" fill="none"/></svg><div style="left:5px;top:216px;width:126px;height:20px;background:linear-gradient(#565656,#383838);border:1px solid #222;border-radius:4px 0 0 4px;box-shadow:0 1px 0 rgba(255,255,255,.12)"></div><div class="t" style="left:54px;top:221px;font-size:11px;color:#fff;"><span style="letter-spacing:-0.58px">Mask</span></div><div style="left:130px;top:216px;width:126px;height:20px;background:linear-gradient(#5680c2,#5a86cc);border:1px solid #222;border-radius:0;box-shadow:0 1px 0 rgba(255,255,255,.12)"></div><div class="t" style="left:153px;top:221px;font-size:11px;color:#000;"><span style="letter-spacing:-0.53px">Z</span><span style="letter-spacing:-0.50px"> </span><span style="letter-spacing:-0.53px">Transparency</span></div><div style="left:255px;top:216px;width:125px;height:20px;background:linear-gradient(#565656,#383838);border:1px solid #222;border-radius:0 4px 4px 0;box-shadow:0 1px 0 rgba(255,255,255,.12)"></div><div class="t" style="left:294px;top:221px;font-size:11px;color:#fff;"><span style="letter-spacing:-0.50px">Raytrace</span></div><div style="left:5px;top:241px;width:375px;height:20px;background:linear-gradient(#666,#7e7e7e);border:1px solid #323232;border-radius:10px;overflow:hidden;box-shadow:0 1px 0 rgba(255,255,255,.12)"><div style="left:9px;top:0px;width:364px;height:18px;background:linear-gradient(#a0a0a0,#b4b4b4)"></div></div><div class="t" style="left:160px;top:246px;font-size:11px;color:#000;"><span style="letter-spacing:-0.66px">Alpha:</span><span style="letter-spacing:-0.50px"> </span>0<span style="letter-spacing:-0.50px">.</span>000</div><div style="left:2px;top:268px;width:382px;height:1px;background:#404040"></div><div style="left:2px;top:269px;width:382px;height:1px;background:#8b8b8b"></div><svg style="left:10px;top:277px" width="8" height="8" viewBox="0 0 8 8"><path d="M0.2 0 L8 4 L0.2 8 Z" fill="#222"/></svg><div class="t" style="left:22px;top:275px;font-size:12px;color:#000;"><span style="letter-spacing:-0.49px">Custom</span><span style="letter-spacing:-0.81px"> </span><span style="letter-spacing:-0.47px">Properties</span></div><svg style="left:362px;top:271px" width="20" height="19" viewBox="0 0 20 19"><path d="M0 0 L17 17" stroke="#575757" stroke-width="1" fill="none"/><path d="M1.2 0 L17.6 16.4" stroke="#909090" stroke-width="1" fill="none"/><path d="M6 0 L17 11" stroke="#575757" stroke-width="1" fill="none"/><path d="M7.2 0 L17.6 10.4" stroke="#909090" stroke-width="1" fill="none"/><path d="M11 0 L17 6" stroke="#575757" stroke-width="1" fill="none"/><path d="M12.2 0 L17.6 5.4" stroke="#909090" stroke-width="1" fill="none"/></svg><div style="left:389px;top:0px;width:14px;height:297px;background:linear-gradient(to right,#555,#646464)"></div><div style="left:402px;top:0px;width:1px;height:297px;background:#909090"></div><div style="left:401px;top:0px;width:1px;height:297px;background:#4a4a4a"></div><div style="left:389px;top:244px;width:13px;height:60px;background:linear-gradient(to right,#a2a2a2,#747474);border:1px solid #3a3a3a;border-radius:6px"></div>
</div>
</body></html>
